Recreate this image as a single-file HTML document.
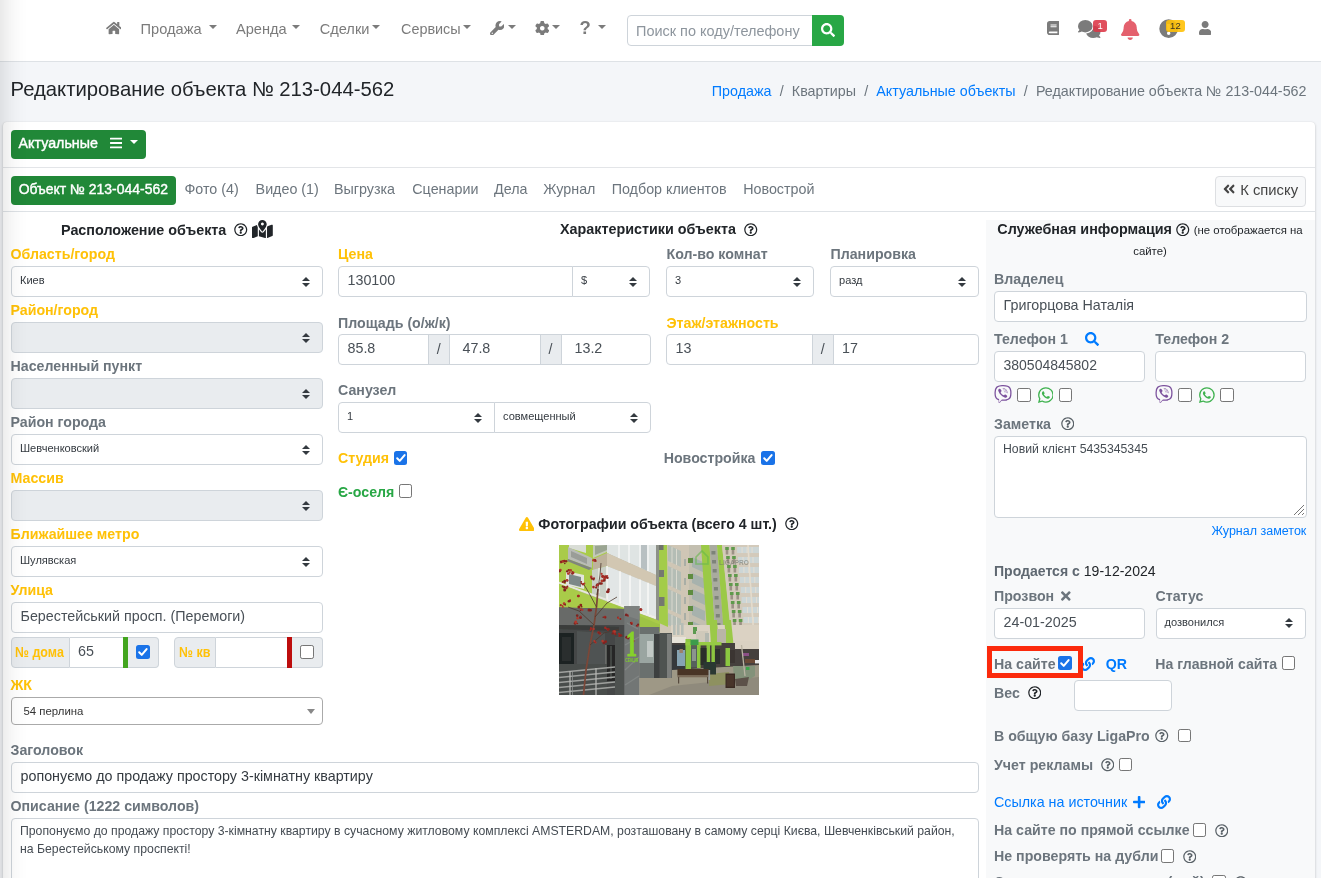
<!DOCTYPE html>
<html lang="ru"><head><meta charset="utf-8"><title>Редактирование объекта № 213-044-562</title>
<style>
html,body{margin:0;padding:0}
body{width:1321px;height:878px;overflow:hidden;position:relative;background:#f4f6f9;font-family:"Liberation Sans",Arial,sans-serif;color:#212529}
#root{position:absolute;left:0;top:0;width:1321px;height:878px;overflow:hidden;will-change:transform}
.a{position:absolute}
.t{white-space:nowrap}
.lnk{color:#007bff}
  .sep{padding:0 8.2px;color:#6c757d}
.inp{background:#fff;border:1px solid #ced4da;border-radius:4px;box-sizing:border-box;padding:0 8.5px;color:#495057;white-space:nowrap;overflow:hidden}
.sel{font-size:11.05px;padding-left:8px;color:#343a40}
.sel.dis{background:#e9ecef}
.arr{position:absolute;right:12px;top:50%;margin-top:-5px}
</style></head><body><div id="root">
<div class="a " style="left:0px;top:0px;width:1321px;height:61px;background:#fff;border-bottom:1px solid #dee2e6"></div>
<svg class="a" style="left:105.7px;top:21px;" width="15.75" height="14" viewBox="0 0 576 512"><path fill="#7b7b7b" d="M280.37 148.26L96 300.11V464a16 16 0 0 0 16 16l112.06-.29a16 16 0 0 0 15.92-16V368a16 16 0 0 1 16-16h64a16 16 0 0 1 16 16v95.64a16 16 0 0 0 16 16.05L464 480a16 16 0 0 0 16-16V300L295.67 148.26a12.19 12.19 0 0 0-15.3 0zM571.6 251.47L488 182.56V44.05a12 12 0 0 0-12-12h-56a12 12 0 0 0-12 12v72.61L318.47 43a48 48 0 0 0-61 0L4.34 251.47a12 12 0 0 0-1.6 16.9l25.5 31A12 12 0 0 0 45.15 301l235.22-193.74a12.19 12.19 0 0 1 15.3 0L530.9 301a12 12 0 0 0 16.9-1.6l25.5-31a12 12 0 0 0-1.7-16.93z"/></svg>
<div class="a t " style="left:140.6px;top:18.5px;line-height:20px;font-size:14.6px;color:#7b7b7b">Продажа</div>
<div class="a" style="left:209.1px;top:25.25px;width:0;height:0;border-left:4.1px solid transparent;border-right:4.1px solid transparent;border-top:4.3px solid #7b7b7b"></div>
<div class="a t " style="left:236px;top:18.5px;line-height:20px;font-size:14.6px;color:#7b7b7b">Аренда</div>
<div class="a" style="left:292.1px;top:25.25px;width:0;height:0;border-left:4.1px solid transparent;border-right:4.1px solid transparent;border-top:4.3px solid #7b7b7b"></div>
<div class="a t " style="left:319.7px;top:18.5px;line-height:20px;font-size:14.6px;color:#7b7b7b">Сделки</div>
<div class="a" style="left:372.3px;top:25.25px;width:0;height:0;border-left:4.1px solid transparent;border-right:4.1px solid transparent;border-top:4.3px solid #7b7b7b"></div>
<div class="a t " style="left:401px;top:18.5px;line-height:20px;font-size:14.6px;color:#7b7b7b;font-size:14.4px">Сервисы</div>
<div class="a" style="left:462.90000000000003px;top:25.25px;width:0;height:0;border-left:4.1px solid transparent;border-right:4.1px solid transparent;border-top:4.3px solid #7b7b7b"></div>
<svg class="a" style="left:489.7px;top:20.5px;" width="14.50" height="14.5" viewBox="0 0 512 512"><path fill="#7b7b7b" d="M352 320Q420 318 465 273Q510 228 512 160Q512 137 506 116Q503 108 495 106Q488 105 482 111L405 187Q400 192 393 192H336Q321 191 320 176V119Q320 112 325 107L402 30Q407 24 406 17Q404 9 396 6Q375 0 352 0Q284 2 239 47Q194 92 192 160Q192 189 202 215L20 396Q0 416 0 444Q1 473 20 492Q39 511 68 512Q96 512 116 492L298 311Q323 320 352 320ZM80 408Q102 410 104 432Q102 454 80 456Q58 454 56 432Q58 410 80 408Z"/></svg>
<div class="a" style="left:507.8px;top:25.150000000000002px;width:0;height:0;border-left:4.1px solid transparent;border-right:4.1px solid transparent;border-top:4.3px solid #7b7b7b"></div>
<svg class="a" style="left:534.8px;top:20.5px;" width="14.50" height="14.5" viewBox="0 0 512 512"><path fill="#7b7b7b" d="M496 167Q500 181 490 191L446 231Q448 243 448 256Q448 269 446 281L490 321Q500 331 496 345Q489 363 480 380L475 388Q465 404 453 419Q443 430 429 426L373 408Q353 424 329 433L317 491Q313 505 298 508Q278 512 256 512Q234 512 213 508Q199 505 195 491L183 433Q159 424 139 408L83 426Q69 430 59 419Q46 404 37 388L32 380Q23 363 16 346Q12 331 22 321L66 282Q64 269 64 256Q64 243 66 231L22 191Q12 181 16 167Q23 149 32 132L37 124Q46 108 59 93Q69 82 83 86L139 104Q159 88 183 78L195 21Q199 7 214 4Q234 0 256 0Q278 0 299 4Q313 7 317 21L329 78Q353 88 373 104L429 86Q443 82 453 93Q466 108 476 124L480 132Q489 149 496 167ZM256 336Q301 335 325 296Q347 256 325 216Q301 177 256 176Q211 177 187 216Q165 256 187 296Q211 335 256 336Z"/></svg>
<div class="a" style="left:552px;top:25.150000000000002px;width:0;height:0;border-left:4.1px solid transparent;border-right:4.1px solid transparent;border-top:4.3px solid #7b7b7b"></div>
<div class="a t " style="left:579.5px;top:17.5px;line-height:20px;font-size:18.5px;font-weight:bold;color:#7b7b7b">?</div>
<div class="a" style="left:598.4px;top:25.150000000000002px;width:0;height:0;border-left:4.1px solid transparent;border-right:4.1px solid transparent;border-top:4.3px solid #7b7b7b"></div>
<div class="a " style="left:627px;top:15px;width:186px;height:31px;background:#fff;border:1px solid #ced4da;border-radius:4px 0 0 4px;box-sizing:border-box"></div>
<div class="a t " style="left:636px;top:20.5px;line-height:20px;font-size:14.47px;color:#8d959d">Поиск по коду/телефону</div>
<div class="a " style="left:812px;top:15px;width:32px;height:31px;background:#28a745;border-radius:0 4px 4px 0"></div>
<svg class="a" style="left:821px;top:23.2px;" width="14.00" height="14" viewBox="0 0 512 512"><path fill="#fff" d="M505 442.7L405.3 343c-4.500-4.500-10.600-7-17-7H372c27.600-35.300 44-79.700 44-128C416 93.100 322.900 0 208 0S0 93.100 0 208s93.100 208 208 208c48.300 0 92.700-16.400 128-44v16.300c0 6.400 2.500 12.500 7 17l99.700 99.700c9.400 9.400 24.600 9.400 33.900 0l28.300-28.300c9.400-9.400 9.400-24.600.1-34zM208 336c-70.700 0-128-57.200-128-128 0-70.700 57.200-128 128-128 70.700 0 128 57.200 128 128 0 70.700-57.200 128-128 128z"/></svg>
<svg class="a" style="left:1046.8px;top:20.6px;" width="12.25" height="14" viewBox="0 0 448 512"><path fill="#7b7b7b" d="M448 360V24c0-13.3-10.7-24-24-24H96C43 0 0 43 0 96v320c0 53 43 96 96 96h328c13.3 0 24-10.7 24-24v-16c0-7.5-3.5-14.300-8.900-18.700-4.200-15.400-4.200-59.300 0-74.700 5.400-4.300 8.900-11.100 8.900-18.600zM128 134c0-3.300 2.700-6 6-6h212c3.300 0 6 2.700 6 6v20c0 3.300-2.700 6-6 6H134c-3.300 0-6-2.700-6-6v-20zm0 64c0-3.300 2.700-6 6-6h212c3.300 0 6 2.700 6 6v20c0 3.300-2.700 6-6 6H134c-3.300 0-6-2.700-6-6v-20zm253.400 250H96c-17.700 0-32-14.300-32-32 0-17.600 14.400-32 32-32h285.400c-1.900 17.100-1.900 46.900 0 64z"/></svg>
<svg class="a" style="left:1078.4px;top:20px;" width="22.50" height="18" viewBox="0 0 640 512"><path fill="#7b7b7b" d="M208 352Q296 350 355 300Q414 251 416 176Q414 101 355 52Q296 2 208 0Q120 2 61 52Q2 101 0 176Q1 235 40 279Q34 294 25 304Q18 313 12 318Q9 321 8 322Q7 323 7 323H6Q-2 330 1 341Q5 351 16 352Q50 351 78 340Q92 334 103 328Q150 351 208 352ZM448 176Q445 262 384 318Q322 374 232 383Q251 440 305 475Q359 511 432 512Q490 511 537 488Q548 494 562 500Q590 511 624 512Q635 511 639 501Q642 490 633 483Q633 483 633 482Q632 482 632 482Q631 481 628 478Q622 473 615 464Q606 453 600 439Q639 395 640 336Q638 265 584 216Q530 167 447 160Q448 168 448 176Z"/></svg>
<div class="a " style="left:1093.3px;top:19.8px;width:13.7px;height:12.6px;background:rgba(220,53,69,.88);border-radius:3px;color:#fff;font-size:9.5px;line-height:12.6px;text-align:center">1</div>
<svg class="a" style="left:1121.3px;top:18.6px;" width="18.38" height="21" viewBox="0 0 448 512"><path fill="#e4606d" d="M224 0Q210 0 201 9Q192 18 192 32V51Q136 63 101 106Q65 149 64 208V227Q63 299 16 354L8 363Q-5 378 3 397Q12 415 32 416H416Q436 415 445 397Q453 378 440 363L433 354Q385 300 384 227V208Q383 149 347 106Q312 63 256 51V32Q256 18 247 9Q238 0 224 0ZM269 493Q288 474 288 448H224H160Q160 474 179 493Q198 512 224 512Q250 512 269 493Z"/></svg>
<svg class="a" style="left:1159.3px;top:19.4px;fill-rule:evenodd" width="19.40" height="19.4" viewBox="0 0 512 512"><path fill="#7b7b7b" d="M256 8a248 248 0 1 0 0 496 248 248 0 1 0 0-496zM256 330a46 46 0 1 1 0 92 46 46 0 1 1 0-92zM212 132h88l-8 168h-72z"/></svg>
<div class="a " style="left:1166px;top:19.8px;width:18.8px;height:12.6px;background:rgba(255,193,7,.9);border-radius:3px;color:#3a3320;font-size:9.5px;line-height:12.6px;text-align:center">12</div>
<svg class="a" style="left:1199px;top:20.8px;" width="12.25" height="14" viewBox="0 0 448 512"><path fill="#7b7b7b" d="M224 256c70.700 0 128-57.300 128-128S294.700 0 224 0 96 57.300 96 128s57.300 128 128 128zm89.600 32h-16.700c-22.200 10.200-46.900 16-72.900 16s-50.600-5.800-72.900-16h-16.700C60.200 288 0 348.200 0 422.400V464c0 26.500 21.500 48 48 48h352c26.500 0 48-21.500 48-48v-41.600c0-74.200-60.200-134.400-134.400-134.400z"/></svg>
<div class="a t " style="left:10.5px;top:75.7px;line-height:26px;font-size:20.3px;color:#212529">Редактирование объекта № 213-044-562</div>
<div class="a t " style="right:14.5px;top:81.0px;line-height:20px;font-size:14.3px;color:#6c757d"><span class="lnk">Продажа</span><span class="sep">/</span>Квартиры<span class="sep">/</span><span class="lnk">Актуальные объекты</span><span class="sep">/</span>Редактирование объекта № 213-044-562</div>
<div class="a " style="left:3px;top:121.5px;width:1312.3px;height:900px;background:#fff;border-radius:4px;box-shadow:0 0 1px rgba(0,0,0,.125),0 1px 3px rgba(0,0,0,.2)"></div>
<div class="a " style="left:3px;top:167px;width:1312.3px;height:1px;background:#e3e5e8"></div>
<div class="a " style="left:3px;top:210.5px;width:1312.3px;height:1px;background:#dee2e6"></div>
<div class="a " style="left:11px;top:130px;width:135px;height:29px;background:#218838;border-radius:4px"></div>
<div class="a t " style="left:18.6px;top:133.2px;line-height:20px;font-size:14.25px;color:#fff;-webkit-text-stroke:.4px #fff">Актуальные</div>
<svg class="a" style="left:109.7px;top:135.6px;" width="12.25" height="14" viewBox="0 0 448 512"><path fill="#fff" d="M16 132h416c8.837 0 16-7.163 16-16V76c0-8.837-7.163-16-16-16H16C7.163 60 0 67.163 0 76v40c0 8.837 7.163 16 16 16zm0 160h416c8.837 0 16-7.163 16-16v-40c0-8.837-7.163-16-16-16H16c-8.837 0-16 7.163-16 16v40c0 8.837 7.163 16 16 16zm0 160h416c8.837 0 16-7.163 16-16v-40c0-8.837-7.163-16-16-16H16c-8.837 0-16 7.163-16 16v40c0 8.837 7.163 16 16 16z"/></svg>
<div class="a" style="left:130px;top:140.0px;width:0;height:0;border-left:4.2px solid transparent;border-right:4.2px solid transparent;border-top:4.4px solid #fff"></div>
<div class="a " style="left:11px;top:176px;width:165px;height:28.5px;background:#218838;border-radius:4px"></div>
<div class="a t " style="left:18.7px;top:178.8px;line-height:20px;font-size:13.95px;color:#fff;-webkit-text-stroke:.4px #fff">Объект № 213-044-562</div>
<div class="a t " style="left:184.4px;top:178.8px;line-height:20px;font-size:14.3px;color:#6c757d">Фото (4)</div>
<div class="a t " style="left:255.6px;top:178.8px;line-height:20px;font-size:14.3px;color:#6c757d">Видео (1)</div>
<div class="a t " style="left:334px;top:178.8px;line-height:20px;font-size:14.3px;color:#6c757d">Выгрузка</div>
<div class="a t " style="left:412.3px;top:178.8px;line-height:20px;font-size:14.3px;color:#6c757d">Сценарии</div>
<div class="a t " style="left:494px;top:178.8px;line-height:20px;font-size:14.3px;color:#6c757d">Дела</div>
<div class="a t " style="left:543.3px;top:178.8px;line-height:20px;font-size:14.3px;color:#6c757d">Журнал</div>
<div class="a t " style="left:611.7px;top:178.8px;line-height:20px;font-size:14.3px;color:#6c757d">Подбор клиентов</div>
<div class="a t " style="left:743.2px;top:178.8px;line-height:20px;font-size:14.3px;color:#6c757d">Новострой</div>
<div class="a " style="left:1215px;top:176px;width:90.5px;height:30.5px;background:#f8f9fa;border:1px solid #dddfe2;border-radius:4px;box-sizing:border-box"></div>
<svg class="a" style="left:1223px;top:182.4px;" width="12.25" height="14" viewBox="0 0 448 512"><path fill="#444" d="M223.700 239l136-136c9.400-9.400 24.600-9.400 33.900 0l22.600 22.600c9.400 9.400 9.400 24.600 0 33.900L319.900 256l96.400 96.400c9.400 9.400 9.400 24.600 0 33.900L393.700 409c-9.400 9.400-24.600 9.400-33.900 0l-136-136c-9.500-9.400-9.500-24.600-.1-34zm-192 34l136 136c9.400 9.400 24.600 9.400 33.900 0l22.600-22.600c9.400-9.400 9.400-24.600 0-33.900L127.900 256l96.400-96.400c9.400-9.400 9.400-24.600 0-33.900L201.700 103c-9.400-9.400-24.600-9.400-33.900 0l-136 136c-9.500 9.400-9.500 24.600-.1 34z"/></svg>
<div class="a t " style="left:1240.2px;top:180.2px;line-height:20px;font-size:14.8px;color:#444">К списку</div>
<div class="a t " style="left:61px;top:219.5px;line-height:20px;font-weight:bold;font-size:14.2px;font-size:14.35px;color:#212529">Расположение объекта</div>
<svg class="a" style="left:234px;top:222.75px;" width="13.50" height="13.5" viewBox="0 0 512 512"><path fill="#212529" d="M256 8C119.043 8 8 119.083 8 256c0 136.997 111.043 248 248 248s248-111.003 248-248C504 119.083 392.957 8 256 8zm0 448c-110.532 0-200-89.431-200-200 0-110.495 89.472-200 200-200 110.491 0 200 89.471 200 200 0 110.530-89.431 200-200 200zm107.244-255.200c0 67.052-72.421 68.084-72.421 92.863V300c0 6.627-5.373 12-12 12h-45.647c-6.627 0-12-5.373-12-12v-8.659c0-35.745 27.100-50.034 47.579-61.516 17.561-9.845 28.324-16.541 28.324-29.579 0-17.246-21.999-28.693-39.784-28.693-23.189 0-33.894 10.977-48.942 29.969-4.057 5.120-11.460 6.071-16.666 2.124l-27.824-21.098c-5.107-3.872-6.251-11.066-2.644-16.363C184.846 131.491 214.940 112 261.794 112c49.071 0 101.450 38.304 101.450 88.800zM298 368c0 23.159-18.841 42-42 42s-42-18.841-42-42 18.841-42 42-42 42 18.841 42 42z"/></svg>
<svg class="a" style="left:252px;top:219.5px;" width="20.81" height="18.5" viewBox="0 0 576 512"><path fill="#212529" d="M408 120Q407 148 388 185Q369 222 344 257Q320 291 303 312Q297 319 288 319Q279 319 273 312Q256 291 232 257Q207 222 188 185Q169 148 168 120Q169 69 203 35Q237 1 288 0Q339 1 373 35Q407 69 408 120ZM416 200Q421 190 426 180Q426 179 426 178Q427 177 427 176L543 130Q556 125 565 132Q575 139 576 152V423Q575 439 561 445L416 503V200ZM138 138Q142 160 150 180Q155 190 160 200V452L33 503Q20 507 11 500Q1 494 0 480V210Q1 194 15 187L138 138ZM328 332Q351 304 384 255V504L192 449V255Q225 304 248 332Q265 351 288 351Q311 351 328 332ZM288 152Q311 151 323 132Q333 112 323 92Q311 73 288 72Q265 73 253 92Q243 112 253 132Q265 151 288 152Z"/></svg>
<div class="a t " style="left:10.5px;top:244.0px;line-height:20px;font-weight:bold;font-size:14.2px;color:#ffc107">Область/город</div>
<div class="a inp sel" style="left:11px;top:266px;width:312px;height:31px;line-height:27.5px;">Киев<svg class="arr" width="8" height="10" viewBox="0 0 4 5"><path fill="#343a40" d="M2 0L0 2h4zm0 5L0 3h4z"/></svg></div>
<div class="a t " style="left:10.5px;top:300.0px;line-height:20px;font-weight:bold;font-size:14.2px;color:#ffc107">Район/город</div>
<div class="a inp sel dis" style="left:11px;top:322px;width:312px;height:31px;line-height:27.5px;"><svg class="arr" width="8" height="10" viewBox="0 0 4 5"><path fill="#343a40" d="M2 0L0 2h4zm0 5L0 3h4z"/></svg></div>
<div class="a t " style="left:10.5px;top:356.0px;line-height:20px;font-weight:bold;font-size:14.2px;color:#6c757d">Населенный пункт</div>
<div class="a inp sel dis" style="left:11px;top:378px;width:312px;height:31px;line-height:27.5px;"><svg class="arr" width="8" height="10" viewBox="0 0 4 5"><path fill="#343a40" d="M2 0L0 2h4zm0 5L0 3h4z"/></svg></div>
<div class="a t " style="left:10.5px;top:412.0px;line-height:20px;font-weight:bold;font-size:14.2px;color:#6c757d">Район города</div>
<div class="a inp sel" style="left:11px;top:434px;width:312px;height:31px;line-height:27.5px;">Шевченковский<svg class="arr" width="8" height="10" viewBox="0 0 4 5"><path fill="#343a40" d="M2 0L0 2h4zm0 5L0 3h4z"/></svg></div>
<div class="a t " style="left:10.5px;top:468.0px;line-height:20px;font-weight:bold;font-size:14.2px;color:#ffc107">Массив</div>
<div class="a inp sel dis" style="left:11px;top:490px;width:312px;height:31px;line-height:27.5px;"><svg class="arr" width="8" height="10" viewBox="0 0 4 5"><path fill="#343a40" d="M2 0L0 2h4zm0 5L0 3h4z"/></svg></div>
<div class="a t " style="left:10.5px;top:524.0px;line-height:20px;font-weight:bold;font-size:14.2px;color:#ffc107">Ближайшее метро</div>
<div class="a inp sel" style="left:11px;top:546px;width:312px;height:31px;line-height:27.5px;">Шулявская<svg class="arr" width="8" height="10" viewBox="0 0 4 5"><path fill="#343a40" d="M2 0L0 2h4zm0 5L0 3h4z"/></svg></div>
<div class="a t " style="left:10.5px;top:580.0px;line-height:20px;font-weight:bold;font-size:14.2px;color:#ffc107">Улица</div>
<div class="a inp" style="left:11px;top:602px;width:312px;height:31px;font-size:14.3px;line-height:27.5px;">Берестейський просп. (Перемоги)</div>
<div class="a " style="left:11px;top:637px;width:58.5px;height:30.5px;background:#e9ecef;border:1px solid #ced4da;border-radius:4px 0 0 4px;box-sizing:border-box"></div>
<div class="a t " style="left:15.4px;top:641.5px;line-height:20px;font-weight:bold;font-size:14.2px;transform:scaleX(.881);transform-origin:0 50%;color:#ffc107">№ дома</div>
<div class="a " style="left:69.5px;top:637px;width:54px;height:30.5px;background:#fff;border:1px solid #ced4da;border-left:0;border-right:0;box-sizing:border-box"></div>
<div class="a t " style="left:78px;top:640.9px;line-height:20px;font-size:14.3px;color:#495057">65</div>
<div class="a " style="left:123px;top:637px;width:5px;height:30.5px;background:#43a51f"></div>
<div class="a " style="left:128px;top:637px;width:30.6px;height:30.5px;background:#e9ecef;border:1px solid #ced4da;border-left:0;border-radius:0 4px 4px 0;box-sizing:border-box"></div>
<div class="a" style="left:136.3px;top:645.2px;width:13.8px;height:13.8px;background:#1a73e8;border-radius:2.5px"><svg width="13.8" height="13.8" viewBox="0 0 13 13" style="display:block"><path d="M3 6.8l2.4 2.5L10 3.8" fill="none" stroke="#fff" stroke-width="1.9" stroke-linecap="round" stroke-linejoin="round"/></svg></div>
<div class="a " style="left:174.3px;top:637px;width:41.5px;height:30.5px;background:#e9ecef;border:1px solid #ced4da;border-radius:4px 0 0 4px;box-sizing:border-box"></div>
<div class="a t " style="left:179.4px;top:641.5px;line-height:20px;font-weight:bold;font-size:14.2px;transform:scaleX(.881);transform-origin:0 50%;color:#ffc107">№ кв</div>
<div class="a " style="left:215.8px;top:637px;width:71.5px;height:30.5px;background:#fff;border:1px solid #ced4da;border-left:0;border-right:0;box-sizing:border-box"></div>
<div class="a " style="left:287px;top:637px;width:5px;height:30.5px;background:#bd0d0d"></div>
<div class="a " style="left:292px;top:637px;width:30.6px;height:30.5px;background:#e9ecef;border:1px solid #ced4da;border-left:0;border-radius:0 4px 4px 0;box-sizing:border-box"></div>
<div class="a" style="left:300.3px;top:645.2px;width:13.8px;height:13.8px;background:#fff;border:1px solid #767676;border-radius:2.2px;box-sizing:border-box"></div>
<div class="a t " style="left:10.5px;top:674.5px;line-height:20px;font-weight:bold;font-size:14.2px;color:#ffc107">ЖК</div>
<div class="a " style="left:11px;top:697px;width:312px;height:28px;background:#fff;border:1px solid #aaa;border-radius:4px;box-sizing:border-box"></div>
<div class="a t " style="left:23.5px;top:701.0px;line-height:20px;font-size:11.4px;color:#333">54 перлина</div>
<div class="a" style="left:307.3px;top:708.8px;width:0;height:0;border-left:4.0px solid transparent;border-right:4.0px solid transparent;border-top:5px solid #888"></div>
<div class="a t " style="left:10.5px;top:740.0px;line-height:20px;font-weight:bold;font-size:14.2px;color:#6c757d">Заголовок</div>
<div class="a inp" style="left:11px;top:761.5px;width:967.5px;height:31px;font-size:14.3px;line-height:27.5px;color:#343a40">ропонуємо до продажу простору 3-кімнатну квартиру</div>
<div class="a t " style="left:10.5px;top:796.0px;line-height:20px;font-weight:bold;font-size:14.2px;color:#6c757d">Описание (1222 символов)</div>
<div class="a " style="left:11px;top:817.5px;width:967.5px;height:80px;background:#fff;border:1px solid #ced4da;border-radius:4px;box-sizing:border-box;padding:3.3px 8px;font-size:12.25px;line-height:18.5px;color:#454c53;white-space:nowrap">Пропонуємо до продажу простору 3-кімнатну квартиру в сучасному житловому комплексі AMSTERDAM, розташовану в самому серці Києва, Шевченківський район,<br>на Берестейському проспекті!</div>
<div class="a t " style="left:560px;top:219.3px;line-height:20px;font-weight:bold;font-size:14.2px;font-size:14.35px;color:#212529">Характеристики объекта</div>
<svg class="a" style="left:744.3px;top:222.55px;" width="13.50" height="13.5" viewBox="0 0 512 512"><path fill="#212529" d="M256 8C119.043 8 8 119.083 8 256c0 136.997 111.043 248 248 248s248-111.003 248-248C504 119.083 392.957 8 256 8zm0 448c-110.532 0-200-89.431-200-200 0-110.495 89.472-200 200-200 110.491 0 200 89.471 200 200 0 110.530-89.431 200-200 200zm107.244-255.200c0 67.052-72.421 68.084-72.421 92.863V300c0 6.627-5.373 12-12 12h-45.647c-6.627 0-12-5.373-12-12v-8.659c0-35.745 27.100-50.034 47.579-61.516 17.561-9.845 28.324-16.541 28.324-29.579 0-17.246-21.999-28.693-39.784-28.693-23.189 0-33.894 10.977-48.942 29.969-4.057 5.120-11.460 6.071-16.666 2.124l-27.824-21.098c-5.107-3.872-6.251-11.066-2.644-16.363C184.846 131.491 214.940 112 261.794 112c49.071 0 101.450 38.304 101.450 88.800zM298 368c0 23.159-18.841 42-42 42s-42-18.841-42-42 18.841-42 42-42 42 18.841 42 42z"/></svg>
<div class="a t " style="left:338px;top:244.0px;line-height:20px;font-weight:bold;font-size:14.2px;color:#ffc107">Цена</div>
<div class="a t " style="left:666.5px;top:244.0px;line-height:20px;font-weight:bold;font-size:14.2px;color:#6c757d">Кол-во комнат</div>
<div class="a t " style="left:830.5px;top:244.0px;line-height:20px;font-weight:bold;font-size:14.2px;color:#6c757d">Планировка</div>
<div class="a inp" style="left:338px;top:266px;width:235px;height:31px;font-size:14.3px;line-height:27.5px;border-radius:4px 0 0 4px">130100</div>
<div class="a inp sel" style="left:572px;top:266px;width:77.5px;height:31px;line-height:27.5px;border-radius:0 4px 4px 0">$<svg class="arr" width="8" height="10" viewBox="0 0 4 5"><path fill="#343a40" d="M2 0L0 2h4zm0 5L0 3h4z"/></svg></div>
<div class="a inp sel" style="left:666px;top:266px;width:148.3px;height:31px;line-height:27.5px;">3<svg class="arr" width="8" height="10" viewBox="0 0 4 5"><path fill="#343a40" d="M2 0L0 2h4zm0 5L0 3h4z"/></svg></div>
<div class="a inp sel" style="left:830px;top:266px;width:148.5px;height:31px;line-height:27.5px;">разд<svg class="arr" width="8" height="10" viewBox="0 0 4 5"><path fill="#343a40" d="M2 0L0 2h4zm0 5L0 3h4z"/></svg></div>
<div class="a t " style="left:338px;top:312.5px;line-height:20px;font-weight:bold;font-size:14.2px;color:#6c757d">Площадь (о/ж/к)</div>
<div class="a t " style="left:666.5px;top:312.5px;line-height:20px;font-weight:bold;font-size:14.2px;color:#ffc107">Этаж/этажность</div>
<div class="a inp" style="left:338px;top:334px;width:91px;height:31px;font-size:14.3px;line-height:27.5px;border-radius:4px 0 0 4px">85.8</div>
<div class="a " style="left:428px;top:334px;width:21.5px;height:31px;background:#e9ecef;border:1px solid #ced4da;box-sizing:border-box;text-align:center;line-height:29px;font-size:14.3px;color:#495057">/</div>
<div class="a inp" style="left:448.5px;top:334px;width:92px;height:31px;font-size:14.3px;line-height:27.5px;border-radius:0;padding-left:13px">47.8</div>
<div class="a " style="left:539.5px;top:334px;width:22px;height:31px;background:#e9ecef;border:1px solid #ced4da;box-sizing:border-box;text-align:center;line-height:29px;font-size:14.3px;color:#495057">/</div>
<div class="a inp" style="left:560.5px;top:334px;width:90px;height:31px;font-size:14.3px;line-height:27.5px;border-radius:0 4px 4px 0;padding-left:13px">13.2</div>
<div class="a inp" style="left:666px;top:334px;width:147px;height:31px;font-size:14.3px;line-height:27.5px;border-radius:4px 0 0 4px">13</div>
<div class="a " style="left:812px;top:334px;width:21.7px;height:31px;background:#e9ecef;border:1px solid #ced4da;box-sizing:border-box;text-align:center;line-height:29px;font-size:14.3px;color:#495057">/</div>
<div class="a inp" style="left:833px;top:334px;width:145.5px;height:31px;font-size:14.3px;line-height:27.5px;border-radius:0 4px 4px 0;padding-left:8px">17</div>
<div class="a t " style="left:338px;top:380.0px;line-height:20px;font-weight:bold;font-size:14.2px;color:#6c757d">Санузел</div>
<div class="a inp sel" style="left:338px;top:402px;width:157px;height:31px;line-height:27.5px;border-radius:4px 0 0 4px">1<svg class="arr" width="8" height="10" viewBox="0 0 4 5"><path fill="#343a40" d="M2 0L0 2h4zm0 5L0 3h4z"/></svg></div>
<div class="a inp sel" style="left:494px;top:402px;width:156.5px;height:31px;line-height:27.5px;border-radius:0 4px 4px 0">совмещенный<svg class="arr" width="8" height="10" viewBox="0 0 4 5"><path fill="#343a40" d="M2 0L0 2h4zm0 5L0 3h4z"/></svg></div>
<div class="a t " style="left:338px;top:448.0px;line-height:20px;font-weight:bold;font-size:14.2px;color:#ffc107">Студия</div>
<div class="a" style="left:393.5px;top:451px;width:13.8px;height:13.8px;background:#1a73e8;border-radius:2.5px"><svg width="13.8" height="13.8" viewBox="0 0 13 13" style="display:block"><path d="M3 6.8l2.4 2.5L10 3.8" fill="none" stroke="#fff" stroke-width="1.9" stroke-linecap="round" stroke-linejoin="round"/></svg></div>
<div class="a t " style="left:663.7px;top:448.0px;line-height:20px;font-weight:bold;font-size:14.2px;color:#6c757d">Новостройка</div>
<div class="a" style="left:760.8px;top:451px;width:13.8px;height:13.8px;background:#1a73e8;border-radius:2.5px"><svg width="13.8" height="13.8" viewBox="0 0 13 13" style="display:block"><path d="M3 6.8l2.4 2.5L10 3.8" fill="none" stroke="#fff" stroke-width="1.9" stroke-linecap="round" stroke-linejoin="round"/></svg></div>
<div class="a t " style="left:338px;top:481.5px;line-height:20px;font-weight:bold;font-size:14.2px;color:#28a745">Є-оселя</div>
<div class="a" style="left:398.5px;top:484px;width:13.8px;height:13.8px;background:#fff;border:1px solid #767676;border-radius:2.2px;box-sizing:border-box"></div>
<svg class="a" style="left:518.5px;top:516.6px;" width="15.75" height="14" viewBox="0 0 576 512"><path fill="#ffc107" d="M569.517 440.013C587.975 472.007 564.806 512 527.940 512H48.054c-36.937 0-59.999-40.055-41.577-71.987L246.423 23.985c18.467-32.009 64.720-31.951 83.154 0l239.940 416.028zM288 354c-25.405 0-46 20.595-46 46s20.595 46 46 46 46-20.595 46-46-20.595-46-46-46zm-43.673-165.346l7.418 136c.347 6.364 5.609 11.346 11.982 11.346h48.546c6.373 0 11.635-4.982 11.982-11.346l7.418-136c.375-6.874-5.098-12.654-11.982-12.654h-63.383c-6.884 0-12.356 5.780-11.981 12.654z"/></svg>
<div class="a t " style="left:538.3px;top:513.7px;line-height:20px;font-weight:bold;font-size:14.2px;font-size:14.18px;color:#212529">Фотографии объекта (всего 4 шт.)</div>
<svg class="a" style="left:785px;top:516.95px;" width="13.50" height="13.5" viewBox="0 0 512 512"><path fill="#212529" d="M256 8C119.043 8 8 119.083 8 256c0 136.997 111.043 248 248 248s248-111.003 248-248C504 119.083 392.957 8 256 8zm0 448c-110.532 0-200-89.431-200-200 0-110.495 89.472-200 200-200 110.491 0 200 89.471 200 200 0 110.530-89.431 200-200 200zm107.244-255.200c0 67.052-72.421 68.084-72.421 92.863V300c0 6.627-5.373 12-12 12h-45.647c-6.627 0-12-5.373-12-12v-8.659c0-35.745 27.100-50.034 47.579-61.516 17.561-9.845 28.324-16.541 28.324-29.579 0-17.246-21.999-28.693-39.784-28.693-23.189 0-33.894 10.977-48.942 29.969-4.057 5.120-11.460 6.071-16.666 2.124l-27.824-21.098c-5.107-3.872-6.251-11.066-2.644-16.363C184.846 131.491 214.940 112 261.794 112c49.071 0 101.450 38.304 101.450 88.800zM298 368c0 23.159-18.841 42-42 42s-42-18.841-42-42 18.841-42 42-42 42 18.841 42 42z"/></svg>
<svg class="a" style="left:559px;top:545px" width="200" height="150" viewBox="0 0 200 150">
<defs><filter id="pb" x="0" y="0" width="100%" height="100%"><feGaussianBlur stdDeviation=".45"/></filter><clipPath id="pc"><rect width="200" height="150"/></clipPath></defs>
<g clip-path="url(#pc)"><g filter="url(#pb)">
<rect x="0" y="0" width="200" height="150" fill="#b9b7a6"/>
<polygon points="0,0 50,0 50,55 0,40" fill="#a9cb4a"/>
<polygon points="10,0 27,0 27,8 10,3" fill="#d9ddd6"/>
<polygon points="34,0 50,0 50,6 34,13" fill="#c3c9b8"/>
<polygon points="36,1 48,0 48,5 36,10" fill="#9aa592"/>
<polygon points="9,2 33,13 33,23 9,14" fill="#b9bcb6"/>
<polygon points="12,6 28,13 28,19 12,12" fill="#9a9d98"/>
<polygon points="9,14 33,23 30,25 8,16" fill="#80857c"/>
<polygon points="7,26 25,30 25,44 7,40" fill="#e3e5dd"/>
<polygon points="10,29 22,32 22,42 10,39" fill="#7d8988"/>
<polygon points="48,0 97,0 97,30 48,8" fill="#dfe4e3"/>
<line x1="60" y1="0" x2="60" y2="13.387755102040817" stroke="#f6f7f6" stroke-width="1.4"/>
<line x1="70" y1="0" x2="70" y2="17.877551020408163" stroke="#f6f7f6" stroke-width="1.4"/>
<line x1="81" y1="0" x2="81" y2="22.816326530612244" stroke="#f6f7f6" stroke-width="1.4"/>
<line x1="89" y1="0" x2="89" y2="26.408163265306122" stroke="#f6f7f6" stroke-width="1.4"/>
<polygon points="82,0 88,0 88,26 82,23" fill="#b8c0c2"/>
<polygon points="34,14 48,8 48,21 34,25" fill="#bdb29c"/>
<polygon points="48,8 97,30 97,41 48,21" fill="#d2c7b2"/>
<polygon points="33,25 48,21 48,55 33,49" fill="#c9cfc6"/>
<polygon points="48,21 97,41 97,72 48,55" fill="#e2e6e6"/>
<line x1="61" y1="26.306122448979593" x2="61" y2="59.51020408163265" stroke="#f8f8f6" stroke-width="1.6"/>
<line x1="71" y1="30.387755102040817" x2="71" y2="62.97959183673469" stroke="#f8f8f6" stroke-width="1.6"/>
<line x1="81" y1="34.46938775510204" x2="81" y2="66.44897959183673" stroke="#f8f8f6" stroke-width="1.6"/>
<line x1="89" y1="37.734693877551024" x2="89" y2="69.22448979591837" stroke="#f8f8f6" stroke-width="1.6"/>
<line x1="48" y1="21" x2="48" y2="55" stroke="#f4f4f0" stroke-width="1.6"/>
<line x1="40" y1="23" x2="40" y2="48" stroke="#eeeee8" stroke-width="1.2"/>
<line x1="0" y1="37.6" x2="48" y2="55" stroke="#e6e7de" stroke-width="2"/>
<line x1="48" y1="55.5" x2="97" y2="73" stroke="#eeeeea" stroke-width="2.4"/>
<polygon points="97,0 101,0 101,80 97,76" fill="#8d9188"/>
<polygon points="0,39 48,56.5 97,74.5 112,80 112,89 81,82.5 65,64 0,62.5" fill="#a9cb4a"/>
<polygon points="55,60 97,78 111,83 111,88 81,82 66,70" fill="#9fc445"/>
<polygon points="0,62.5 66,64 66,150 0,150" fill="#444746"/>
<polygon points="0,62.5 66,64 66,80 0,80" fill="#676a67"/>
<polygon points="0,80 60,82 60,86 0,84" fill="#3a3c3b"/>
<rect x="0" y="88" width="15" height="31" fill="#1f2120"/>
<rect x="3" y="92" width="9" height="24" fill="#2b2e2d"/>
<polygon points="18,86 46,88 46,126 18,124" fill="#4f5352"/>
<rect x="47" y="100" width="9" height="36" fill="#262827"/>
<line x1="47" y1="100" x2="47" y2="136" stroke="#8a8d8b" stroke-width="1"/>
<line x1="52" y1="101" x2="52" y2="134" stroke="#6d706e" stroke-width="0.8"/>
<rect x="0" y="119" width="48" height="31" fill="#4a4d4c"/>
<line x1="0" y1="127.5" x2="56" y2="122" stroke="#9fa19e" stroke-width="1.3"/>
<line x1="0" y1="132.5" x2="56" y2="127" stroke="#9fa19e" stroke-width="1.3"/>
<line x1="0" y1="137.5" x2="56" y2="132" stroke="#9fa19e" stroke-width="1.3"/>
<line x1="0" y1="142.5" x2="56" y2="137" stroke="#9fa19e" stroke-width="1.3"/>
<line x1="0" y1="147.5" x2="56" y2="142" stroke="#9fa19e" stroke-width="1.3"/>
<line x1="11" y1="126" x2="11" y2="150" stroke="#b9bbb8" stroke-width="1.2"/>
<line x1="37" y1="123" x2="37" y2="150" stroke="#b9bbb8" stroke-width="1.2"/>
<line x1="13.5" y1="127" x2="13.5" y2="150" stroke="#8f9290" stroke-width="0.8"/>
<rect x="56" y="92" width="10" height="58" fill="#4e5150"/>
<rect x="65.3" y="61" width="15.2" height="89" fill="#727675"/>
<polygon points="65.3,61 80.5,61 80.5,75 65.3,70" fill="#7d817f"/>
<line x1="66" y1="100" x2="80" y2="92" stroke="#8b908e" stroke-width="1.2" opacity="0.6"/>
<line x1="66" y1="125" x2="80" y2="112" stroke="#8b908e" stroke-width="1.2" opacity="0.6"/>
<line x1="66" y1="140" x2="80" y2="131" stroke="#8b908e" stroke-width="1.2" opacity="0.6"/>
<line x1="68" y1="78" x2="79" y2="84" stroke="#8b908e" stroke-width="1.2" opacity="0.6"/>
<rect x="80.5" y="82" width="20" height="68" fill="#6b6f6e"/>
<rect x="80.5" y="89" width="14.5" height="29" fill="#9aa5a1"/>
<rect x="88" y="96" width="6" height="16" fill="#c2c9c6"/>
<rect x="80.5" y="118" width="14.5" height="15" fill="#6a6f6e"/>
<rect x="80.5" y="133" width="32" height="17" fill="#a7a7a1"/>
<rect x="95" y="89" width="6" height="44" fill="#3e4140"/>
<rect x="101" y="0" width="99" height="110" fill="#cfc6b5"/>
<polygon points="100,0 108,0 109,82 100,78" fill="#a3cc48"/>
<rect x="100" y="0" width="4.5" height="5" fill="#6f736d"/>
<rect x="100" y="25" width="5" height="7" fill="#74786f"/>
<rect x="100" y="52" width="5.5" height="9" fill="#74786f"/>
<polygon points="109,0 122,6 122,22 109,16" fill="#b4bdb5"/>
<line x1="113" y1="2" x2="113" y2="18" stroke="#e3e0d6" stroke-width="0.8"/>
<line x1="117.5" y1="4" x2="117.5" y2="20" stroke="#e3e0d6" stroke-width="0.8"/>
<polygon points="109,21 122,27 122,46 109,40" fill="#b4bdb5"/>
<line x1="113" y1="23" x2="113" y2="42" stroke="#e3e0d6" stroke-width="0.8"/>
<line x1="117.5" y1="25" x2="117.5" y2="44" stroke="#e3e0d6" stroke-width="0.8"/>
<polygon points="109,44 122,50 122,70 109,64" fill="#b4bdb5"/>
<line x1="113" y1="46" x2="113" y2="66" stroke="#e3e0d6" stroke-width="0.8"/>
<line x1="117.5" y1="48" x2="117.5" y2="68" stroke="#e3e0d6" stroke-width="0.8"/>
<polygon points="109,68 122,74 122,86 109,80" fill="#b4bdb5"/>
<line x1="113" y1="70" x2="113" y2="82" stroke="#e3e0d6" stroke-width="0.8"/>
<line x1="117.5" y1="72" x2="117.5" y2="84" stroke="#e3e0d6" stroke-width="0.8"/>
<rect x="125" y="14" width="2" height="7" fill="#a9aea6"/>
<rect x="125" y="33" width="2" height="7" fill="#a9aea6"/>
<rect x="125" y="52" width="2" height="7" fill="#a9aea6"/>
<rect x="125" y="68" width="2" height="7" fill="#a9aea6"/>
<polygon points="130,0 143,0 150,100 130,100" fill="#c3bfb0"/>
<polygon points="133,12 146,18 146,28 133,22" fill="#a7b2ad"/>
<rect x="129" y="13" width="5" height="5" fill="#5e8c3f"/>
<polygon points="133,28 146,34 146,44 133,38" fill="#a7b2ad"/>
<rect x="129" y="29" width="5" height="5" fill="#5e8c3f"/>
<polygon points="133,44 146,50 146,60 133,54" fill="#a7b2ad"/>
<rect x="129" y="45" width="5" height="5" fill="#5e8c3f"/>
<polygon points="133,60 146,66 146,76 133,70" fill="#a7b2ad"/>
<rect x="129" y="61" width="5" height="5" fill="#5e8c3f"/>
<polygon points="133,76 146,82 146,92 133,86" fill="#a7b2ad"/>
<rect x="129" y="77" width="5" height="5" fill="#5e8c3f"/>
<polygon points="142,0 150.5,0 157,100 149,100" fill="#9bc947"/>
<polygon points="150.5,0 158,0 166,100 157,100" fill="#a9ab9f"/>
<rect x="152.42" y="6" width="4" height="3.5" fill="#7d8379"/>
<rect x="153.05" y="15" width="4" height="3.5" fill="#7d8379"/>
<rect x="153.68" y="24" width="4" height="3.5" fill="#7d8379"/>
<rect x="154.31" y="33" width="4" height="3.5" fill="#7d8379"/>
<rect x="154.94" y="42" width="4" height="3.5" fill="#7d8379"/>
<rect x="155.57" y="51" width="4" height="3.5" fill="#7d8379"/>
<rect x="156.2" y="60" width="4" height="3.5" fill="#7d8379"/>
<rect x="156.83" y="69" width="4" height="3.5" fill="#7d8379"/>
<rect x="157.46" y="78" width="4" height="3.5" fill="#7d8379"/>
<rect x="158.09" y="87" width="4" height="3.5" fill="#7d8379"/>
<rect x="158.72" y="96" width="4" height="3.5" fill="#7d8379"/>
<polygon points="158,0 163,0 174,104 166,104" fill="#9bc947"/>
<polygon points="163,0 200,0 200,110 174,110" fill="#d3cabb"/>
<rect x="166.21" y="2" width="3.6" height="3" fill="#5f9a4c"/>
<rect x="172.21" y="2" width="3.6" height="3" fill="#5f9a4c"/>
<rect x="166.71" y="5" width="2.6" height="4.5" fill="#9b9185"/>
<rect x="172.71" y="5" width="2.6" height="4.5" fill="#9b9185"/>
<rect x="167.155" y="11" width="3.6" height="3" fill="#5f9a4c"/>
<rect x="173.155" y="11" width="3.6" height="3" fill="#5f9a4c"/>
<rect x="167.655" y="14" width="2.6" height="4.5" fill="#9b9185"/>
<rect x="173.655" y="14" width="2.6" height="4.5" fill="#9b9185"/>
<rect x="168.1" y="20" width="3.6" height="3" fill="#5f9a4c"/>
<rect x="174.1" y="20" width="3.6" height="3" fill="#5f9a4c"/>
<rect x="168.6" y="23" width="2.6" height="4.5" fill="#9b9185"/>
<rect x="174.6" y="23" width="2.6" height="4.5" fill="#9b9185"/>
<rect x="169.045" y="29" width="3.6" height="3" fill="#5f9a4c"/>
<rect x="175.045" y="29" width="3.6" height="3" fill="#5f9a4c"/>
<rect x="169.545" y="32" width="2.6" height="4.5" fill="#9b9185"/>
<rect x="175.545" y="32" width="2.6" height="4.5" fill="#9b9185"/>
<rect x="169.99" y="38" width="3.6" height="3" fill="#5f9a4c"/>
<rect x="175.99" y="38" width="3.6" height="3" fill="#5f9a4c"/>
<rect x="170.49" y="41" width="2.6" height="4.5" fill="#9b9185"/>
<rect x="176.49" y="41" width="2.6" height="4.5" fill="#9b9185"/>
<rect x="170.935" y="47" width="3.6" height="3" fill="#5f9a4c"/>
<rect x="176.935" y="47" width="3.6" height="3" fill="#5f9a4c"/>
<rect x="171.435" y="50" width="2.6" height="4.5" fill="#9b9185"/>
<rect x="177.435" y="50" width="2.6" height="4.5" fill="#9b9185"/>
<rect x="171.88" y="56" width="3.6" height="3" fill="#5f9a4c"/>
<rect x="177.88" y="56" width="3.6" height="3" fill="#5f9a4c"/>
<rect x="172.38" y="59" width="2.6" height="4.5" fill="#9b9185"/>
<rect x="178.38" y="59" width="2.6" height="4.5" fill="#9b9185"/>
<rect x="172.825" y="65" width="3.6" height="3" fill="#5f9a4c"/>
<rect x="178.825" y="65" width="3.6" height="3" fill="#5f9a4c"/>
<rect x="173.325" y="68" width="2.6" height="4.5" fill="#9b9185"/>
<rect x="179.325" y="68" width="2.6" height="4.5" fill="#9b9185"/>
<rect x="173.77" y="74" width="3.6" height="3" fill="#5f9a4c"/>
<rect x="179.77" y="74" width="3.6" height="3" fill="#5f9a4c"/>
<rect x="174.27" y="77" width="2.6" height="4.5" fill="#9b9185"/>
<rect x="180.27" y="77" width="2.6" height="4.5" fill="#9b9185"/>
<rect x="174.715" y="83" width="3.6" height="3" fill="#5f9a4c"/>
<rect x="180.715" y="83" width="3.6" height="3" fill="#5f9a4c"/>
<rect x="175.215" y="86" width="2.6" height="4.5" fill="#9b9185"/>
<rect x="181.215" y="86" width="2.6" height="4.5" fill="#9b9185"/>
<rect x="175.66" y="92" width="3.6" height="3" fill="#5f9a4c"/>
<rect x="181.66" y="92" width="3.6" height="3" fill="#5f9a4c"/>
<rect x="176.16" y="95" width="2.6" height="4.5" fill="#9b9185"/>
<rect x="182.16" y="95" width="2.6" height="4.5" fill="#9b9185"/>
<rect x="178.09" y="2" width="21.909999999999997" height="6" fill="#cdd6d6"/>
<line x1="183.09" y1="2" x2="183.09" y2="8" stroke="#e6dfd2" stroke-width="0.9"/>
<line x1="188.09" y1="2" x2="188.09" y2="8" stroke="#e6dfd2" stroke-width="0.9"/>
<line x1="193.09" y1="2" x2="193.09" y2="8" stroke="#e6dfd2" stroke-width="0.9"/>
<rect x="178.99" y="12" width="21.00999999999999" height="6" fill="#cdd6d6"/>
<line x1="183.99" y1="12" x2="183.99" y2="18" stroke="#e6dfd2" stroke-width="0.9"/>
<line x1="188.99" y1="12" x2="188.99" y2="18" stroke="#e6dfd2" stroke-width="0.9"/>
<line x1="193.99" y1="12" x2="193.99" y2="18" stroke="#e6dfd2" stroke-width="0.9"/>
<rect x="179.89" y="22" width="20.110000000000014" height="6" fill="#cdd6d6"/>
<line x1="184.89" y1="22" x2="184.89" y2="28" stroke="#e6dfd2" stroke-width="0.9"/>
<line x1="189.89" y1="22" x2="189.89" y2="28" stroke="#e6dfd2" stroke-width="0.9"/>
<line x1="194.89" y1="22" x2="194.89" y2="28" stroke="#e6dfd2" stroke-width="0.9"/>
<rect x="180.79" y="32" width="19.210000000000008" height="6" fill="#cdd6d6"/>
<line x1="185.79" y1="32" x2="185.79" y2="38" stroke="#e6dfd2" stroke-width="0.9"/>
<line x1="190.79" y1="32" x2="190.79" y2="38" stroke="#e6dfd2" stroke-width="0.9"/>
<line x1="195.79" y1="32" x2="195.79" y2="38" stroke="#e6dfd2" stroke-width="0.9"/>
<rect x="181.69" y="42" width="18.310000000000002" height="6" fill="#cdd6d6"/>
<line x1="186.69" y1="42" x2="186.69" y2="48" stroke="#e6dfd2" stroke-width="0.9"/>
<line x1="191.69" y1="42" x2="191.69" y2="48" stroke="#e6dfd2" stroke-width="0.9"/>
<line x1="196.69" y1="42" x2="196.69" y2="48" stroke="#e6dfd2" stroke-width="0.9"/>
<rect x="182.59" y="52" width="17.409999999999997" height="6" fill="#cdd6d6"/>
<line x1="187.59" y1="52" x2="187.59" y2="58" stroke="#e6dfd2" stroke-width="0.9"/>
<line x1="192.59" y1="52" x2="192.59" y2="58" stroke="#e6dfd2" stroke-width="0.9"/>
<line x1="197.59" y1="52" x2="197.59" y2="58" stroke="#e6dfd2" stroke-width="0.9"/>
<rect x="183.49" y="62" width="16.50999999999999" height="6" fill="#cdd6d6"/>
<line x1="188.49" y1="62" x2="188.49" y2="68" stroke="#e6dfd2" stroke-width="0.9"/>
<line x1="193.49" y1="62" x2="193.49" y2="68" stroke="#e6dfd2" stroke-width="0.9"/>
<line x1="198.49" y1="62" x2="198.49" y2="68" stroke="#e6dfd2" stroke-width="0.9"/>
<rect x="184.39" y="72" width="15.610000000000014" height="6" fill="#cdd6d6"/>
<line x1="189.39" y1="72" x2="189.39" y2="78" stroke="#e6dfd2" stroke-width="0.9"/>
<line x1="194.39" y1="72" x2="194.39" y2="78" stroke="#e6dfd2" stroke-width="0.9"/>
<line x1="199.39" y1="72" x2="199.39" y2="78" stroke="#e6dfd2" stroke-width="0.9"/>
<rect x="185.29" y="82" width="14.710000000000008" height="6" fill="#cdd6d6"/>
<line x1="190.29" y1="82" x2="190.29" y2="88" stroke="#e6dfd2" stroke-width="0.9"/>
<line x1="195.29" y1="82" x2="195.29" y2="88" stroke="#e6dfd2" stroke-width="0.9"/>
<line x1="200.29" y1="82" x2="200.29" y2="88" stroke="#e6dfd2" stroke-width="0.9"/>
<rect x="186.19" y="92" width="13.810000000000002" height="6" fill="#cdd6d6"/>
<line x1="191.19" y1="92" x2="191.19" y2="98" stroke="#e6dfd2" stroke-width="0.9"/>
<line x1="196.19" y1="92" x2="196.19" y2="98" stroke="#e6dfd2" stroke-width="0.9"/>
<line x1="201.19" y1="92" x2="201.19" y2="98" stroke="#e6dfd2" stroke-width="0.9"/>
<rect x="187.09" y="102" width="12.909999999999997" height="6" fill="#cdd6d6"/>
<line x1="192.09" y1="102" x2="192.09" y2="108" stroke="#e6dfd2" stroke-width="0.9"/>
<line x1="197.09" y1="102" x2="197.09" y2="108" stroke="#e6dfd2" stroke-width="0.9"/>
<line x1="202.09" y1="102" x2="202.09" y2="108" stroke="#e6dfd2" stroke-width="0.9"/>
<line x1="189" y1="0" x2="196" y2="110" stroke="#e4dccd" stroke-width="1.6"/>
<rect x="112" y="80" width="88" height="26" fill="#dbd2c3"/>
<rect x="114" y="78" width="2.6" height="12" fill="#b6bdb6"/>
<rect x="118" y="78" width="2.6" height="12" fill="#b6bdb6"/>
<rect x="122" y="78" width="2.6" height="12" fill="#b6bdb6"/>
<rect x="112" y="92" width="15" height="6" fill="#e7e3d9"/>
<rect x="134" y="82" width="4" height="7" fill="#5c9a4f"/>
<rect x="137" y="86" width="12" height="11" fill="#cfc9ba"/>
<rect x="146" y="88" width="4" height="9" fill="#b3b8b0"/>
<polygon points="150.5,75 158,75 160,101 152,101" fill="#9bc947"/>
<polygon points="165.5,75 172,75 175,104 167,104" fill="#9bc947"/>
<rect x="158" y="84" width="9" height="14" fill="#b9b5a6"/>
<rect x="112" y="98" width="88" height="27" fill="#45413c"/>
<rect x="113" y="100" width="14" height="26" fill="#35383a"/>
<rect x="118" y="105" width="8" height="16" fill="#86a3b3"/>
<rect x="120.5" y="104" width="3.4" height="4" fill="#9c7f68"/>
<rect x="126.5" y="94" width="5.5" height="30" fill="#8cc63f"/>
<rect x="138" y="98" width="3.6" height="25" fill="#8cc63f"/>
<rect x="126.5" y="97" width="36" height="3.4" fill="#97cb45"/>
<rect x="131.5" y="94.5" width="8" height="5.5" fill="#3c9c4b"/>
<rect x="132" y="100.5" width="6" height="22" fill="#56605c"/>
<rect x="133" y="104" width="4" height="12" fill="#8b958f"/>
<rect x="147.5" y="100" width="3.5" height="22" fill="#8cc63f"/>
<rect x="152.5" y="100" width="3.4" height="21" fill="#8cc63f"/>
<rect x="166.5" y="103" width="4.5" height="18" fill="#8cc63f"/>
<rect x="141.6" y="103" width="5.9" height="17" fill="#2a2d2c"/>
<rect x="156" y="104" width="5" height="15" fill="#2f302e"/>
<rect x="171" y="105" width="5" height="13" fill="#3b3632"/>
<rect x="176" y="96" width="24" height="8" fill="#d9d1c2"/>
<rect x="184" y="108" width="6" height="3" fill="#8b4f86"/>
<rect x="186" y="114" width="10" height="4" fill="#6a4a34"/>
<rect x="196" y="115" width="4" height="3.4" fill="#e8e8e8"/>
<rect x="100.5" y="88" width="12.5" height="54" fill="#4f5251"/>
<rect x="108" y="89" width="4.6" height="53" fill="#7b7e7c"/>
<polygon points="80.5,133 113,133 113,125 200,120 200,150 80.5,150" fill="#9e9886"/>
<polygon points="113,141 200,132 200,150 90,150" fill="#8f8a7b"/>
<polygon points="150,129 170,127 172,139 150,141" fill="#8e9160"/>
<polygon points="174,121 196,121 196,131 186,137 175,134" fill="#83927a"/>
<polygon points="176,134 190,132 188,141 177,141" fill="#5b5149"/>
<line x1="182.5" y1="100" x2="186" y2="131" stroke="#b9b3a3" stroke-width="1.3"/>
<rect x="187" y="122" width="3.5" height="3" fill="#3aa64a"/>
<rect x="144.5" y="117" width="12.5" height="12.5" fill="#2c3833"/>
<rect x="118.4" y="124" width="31.6" height="6.5" fill="#4a3428"/>
<rect x="118.4" y="130.5" width="32" height="1.8" fill="#7a6a58"/>
<rect x="119" y="132" width="1.2" height="6.5" fill="#55483c"/>
<rect x="148" y="132" width="1.2" height="6.5" fill="#55483c"/>
<rect x="149.5" y="125" width="1.6" height="10" fill="#9aa09c"/>
<rect x="166.5" y="128.5" width="9.5" height="14.5" fill="#3b2a23"/>
<rect x="167.6" y="130" width="7.2" height="11.5" fill="#4a362c"/>
<path d="M24.5,150 L27,125 L31,100 L35,80 L37.5,62 L39,44" fill="none" stroke="#7b4637" stroke-width="1.7"/>
<path d="M37.5,62 L30,48 L24,38 M36,72 L48,58 L58,52 M35,80 L20,66 L9,62 M31,100 L45,88 L60,84 M38,50 L41,30 L42,18" fill="none" stroke="#4e3a30" stroke-width=".8"/>
<circle cx="3.9" cy="16.4" r="1.3" fill="#a12a24"/>
<circle cx="7.1" cy="16.2" r="1.2" fill="#8c231f"/>
<circle cx="2.0" cy="17.7" r="0.8" fill="#a12a24"/>
<circle cx="5.3" cy="16.0" r="1.2" fill="#8c231f"/>
<circle cx="5.8" cy="18.4" r="0.8" fill="#7d2320"/>
<circle cx="2.1" cy="16.8" r="1.2" fill="#8c231f"/>
<circle cx="3.7" cy="16.4" r="0.9" fill="#b3372c"/>
<circle cx="1.3" cy="25.6" r="0.9" fill="#8c231f"/>
<circle cx="0.4" cy="25.1" r="0.8" fill="#a12a24"/>
<circle cx="1.5" cy="25.0" r="1.2" fill="#b3372c"/>
<circle cx="0.8" cy="26.3" r="1.1" fill="#8c231f"/>
<circle cx="10.8" cy="27.8" r="1.0" fill="#b3372c"/>
<circle cx="9.2" cy="28.6" r="1.3" fill="#b3372c"/>
<circle cx="9.7" cy="25.2" r="1.2" fill="#8c231f"/>
<circle cx="10.5" cy="25.5" r="1.1" fill="#a12a24"/>
<circle cx="11.8" cy="25.2" r="1.2" fill="#b3372c"/>
<circle cx="8.0" cy="26.4" r="1.1" fill="#7d2320"/>
<circle cx="13.4" cy="27.0" r="1.0" fill="#a12a24"/>
<circle cx="13.4" cy="28.5" r="1.3" fill="#7d2320"/>
<circle cx="14.2" cy="27.7" r="1.3" fill="#a12a24"/>
<circle cx="8.3" cy="35.5" r="1.2" fill="#7d2320"/>
<circle cx="3.7" cy="37.0" r="0.9" fill="#8c231f"/>
<circle cx="5.5" cy="37.5" r="1.1" fill="#8c231f"/>
<circle cx="5.7" cy="36.2" r="1.4" fill="#7d2320"/>
<circle cx="7.9" cy="35.2" r="1.1" fill="#b3372c"/>
<circle cx="7.3" cy="42.4" r="1.0" fill="#a12a24"/>
<circle cx="3.7" cy="41.6" r="1.0" fill="#7d2320"/>
<circle cx="8.4" cy="41.4" r="1.0" fill="#8c231f"/>
<circle cx="5.4" cy="42.3" r="1.2" fill="#8c231f"/>
<circle cx="7.4" cy="43.1" r="1.2" fill="#a12a24"/>
<circle cx="5.7" cy="44.9" r="1.5" fill="#7d2320"/>
<circle cx="5.3" cy="42.5" r="1.1" fill="#7d2320"/>
<circle cx="22.2" cy="36.8" r="0.9" fill="#8c231f"/>
<circle cx="22.4" cy="38.3" r="0.9" fill="#8c231f"/>
<circle cx="24.1" cy="39.3" r="1.2" fill="#a12a24"/>
<circle cx="25.5" cy="38.3" r="0.9" fill="#b3372c"/>
<circle cx="35.0" cy="33.3" r="1.1" fill="#a12a24"/>
<circle cx="34.5" cy="34.5" r="1.1" fill="#7d2320"/>
<circle cx="32.2" cy="31.9" r="1.3" fill="#b3372c"/>
<circle cx="32.9" cy="33.6" r="1.2" fill="#8c231f"/>
<circle cx="36.8" cy="16.1" r="0.9" fill="#a12a24"/>
<circle cx="36.0" cy="15.4" r="1.3" fill="#a12a24"/>
<circle cx="35.8" cy="15.3" r="1.1" fill="#8c231f"/>
<circle cx="34.4" cy="15.2" r="1.2" fill="#b3372c"/>
<circle cx="47.1" cy="31.6" r="1.4" fill="#8c231f"/>
<circle cx="48.4" cy="32.8" r="1.3" fill="#8c231f"/>
<circle cx="43.6" cy="31.0" r="1.3" fill="#a12a24"/>
<circle cx="48.3" cy="30.8" r="0.9" fill="#b3372c"/>
<circle cx="45.6" cy="33.4" r="1.5" fill="#b3372c"/>
<circle cx="42.6" cy="28.8" r="1.1" fill="#b3372c"/>
<circle cx="43.6" cy="31.7" r="1.4" fill="#a12a24"/>
<circle cx="45.8" cy="31.9" r="1.4" fill="#a12a24"/>
<circle cx="44.6" cy="35.7" r="1.1" fill="#8c231f"/>
<circle cx="42.9" cy="35.9" r="1.4" fill="#b3372c"/>
<circle cx="41.0" cy="38.5" r="1.3" fill="#7d2320"/>
<circle cx="42.5" cy="38.5" r="1.3" fill="#8c231f"/>
<circle cx="45.4" cy="35.4" r="1.2" fill="#7d2320"/>
<circle cx="38.6" cy="39.7" r="1.4" fill="#7d2320"/>
<circle cx="37.8" cy="40.5" r="1.2" fill="#8c231f"/>
<circle cx="34.5" cy="42.1" r="1.3" fill="#a12a24"/>
<circle cx="37.1" cy="42.6" r="1.1" fill="#8c231f"/>
<circle cx="38.7" cy="39.9" r="1.0" fill="#b3372c"/>
<circle cx="48.0" cy="46.9" r="1.0" fill="#7d2320"/>
<circle cx="49.6" cy="44.5" r="1.3" fill="#7d2320"/>
<circle cx="48.8" cy="47.1" r="1.2" fill="#8c231f"/>
<circle cx="48.2" cy="46.1" r="0.8" fill="#7d2320"/>
<circle cx="49.3" cy="46.4" r="1.3" fill="#8c231f"/>
<circle cx="19.2" cy="51.0" r="1.3" fill="#a12a24"/>
<circle cx="19.6" cy="51.0" r="1.2" fill="#a12a24"/>
<circle cx="11.1" cy="55.1" r="0.9" fill="#a12a24"/>
<circle cx="10.8" cy="56.0" r="1.2" fill="#a12a24"/>
<circle cx="9.8" cy="56.2" r="1.2" fill="#8c231f"/>
<circle cx="5.5" cy="58.9" r="1.2" fill="#7d2320"/>
<circle cx="5.0" cy="58.5" r="1.2" fill="#b3372c"/>
<circle cx="6.2" cy="59.8" r="0.9" fill="#7d2320"/>
<circle cx="1.8" cy="60.2" r="1.1" fill="#a12a24"/>
<circle cx="3.5" cy="60.8" r="0.9" fill="#b3372c"/>
<circle cx="3.9" cy="61.9" r="0.9" fill="#b3372c"/>
<circle cx="19.9" cy="61.9" r="1.5" fill="#8c231f"/>
<circle cx="21.8" cy="60.1" r="1.4" fill="#8c231f"/>
<circle cx="22.6" cy="61.7" r="0.9" fill="#7d2320"/>
<circle cx="23.4" cy="64.8" r="1.1" fill="#b3372c"/>
<circle cx="21.5" cy="65.4" r="0.8" fill="#7d2320"/>
<circle cx="21.8" cy="64.1" r="1.0" fill="#b3372c"/>
<circle cx="30.0" cy="64.9" r="1.5" fill="#8c231f"/>
<circle cx="31.7" cy="65.0" r="1.0" fill="#a12a24"/>
<circle cx="31.5" cy="65.2" r="1.3" fill="#7d2320"/>
<circle cx="21.5" cy="72.5" r="1.5" fill="#7d2320"/>
<circle cx="18.5" cy="73.3" r="1.2" fill="#b3372c"/>
<circle cx="18.2" cy="70.6" r="1.3" fill="#7d2320"/>
<circle cx="21.7" cy="71.3" r="0.8" fill="#a12a24"/>
<circle cx="46.0" cy="72.1" r="1.4" fill="#a12a24"/>
<circle cx="44.2" cy="72.2" r="0.8" fill="#7d2320"/>
<circle cx="46.4" cy="72.5" r="0.9" fill="#8c231f"/>
<circle cx="61.4" cy="74.1" r="1.0" fill="#8c231f"/>
<circle cx="59.0" cy="72.6" r="1.0" fill="#8c231f"/>
<circle cx="59.3" cy="73.0" r="0.9" fill="#b3372c"/>
<circle cx="69.0" cy="71.1" r="0.8" fill="#a12a24"/>
<circle cx="68.7" cy="70.1" r="0.9" fill="#7d2320"/>
<circle cx="67.2" cy="69.9" r="1.3" fill="#7d2320"/>
<circle cx="72.5" cy="78.1" r="1.4" fill="#b3372c"/>
<circle cx="72.6" cy="79.1" r="1.0" fill="#8c231f"/>
<circle cx="71.7" cy="77.7" r="0.8" fill="#8c231f"/>
<circle cx="16.1" cy="78.4" r="1.4" fill="#7d2320"/>
<circle cx="16.7" cy="76.8" r="1.4" fill="#b3372c"/>
<circle cx="18.4" cy="78.5" r="0.8" fill="#8c231f"/>
<circle cx="16.6" cy="77.8" r="1.0" fill="#b3372c"/>
<circle cx="34.9" cy="84.1" r="1.0" fill="#b3372c"/>
<circle cx="31.9" cy="83.1" r="1.0" fill="#a12a24"/>
<circle cx="32.9" cy="84.0" r="0.9" fill="#a12a24"/>
<circle cx="31.4" cy="84.9" r="0.9" fill="#a12a24"/>
<circle cx="39.5" cy="87.4" r="1.2" fill="#a12a24"/>
<circle cx="40.4" cy="88.1" r="1.3" fill="#7d2320"/>
<circle cx="41.2" cy="88.7" r="1.1" fill="#b3372c"/>
<circle cx="41.0" cy="88.4" r="0.8" fill="#7d2320"/>
<circle cx="48.9" cy="84.9" r="0.9" fill="#a12a24"/>
<circle cx="49.3" cy="84.2" r="1.4" fill="#8c231f"/>
<circle cx="46.3" cy="82.7" r="1.2" fill="#a12a24"/>
<circle cx="47.5" cy="83.9" r="0.8" fill="#a12a24"/>
<circle cx="55.6" cy="88.6" r="1.1" fill="#a12a24"/>
<circle cx="54.8" cy="86.6" r="1.5" fill="#a12a24"/>
<circle cx="55.8" cy="86.5" r="1.3" fill="#b3372c"/>
<circle cx="56.5" cy="89.2" r="1.0" fill="#8c231f"/>
<circle cx="53.7" cy="88.5" r="1.1" fill="#7d2320"/>
<circle cx="60.3" cy="91.1" r="1.0" fill="#a12a24"/>
<circle cx="62.5" cy="90.4" r="0.9" fill="#8c231f"/>
<circle cx="61.3" cy="90.4" r="1.3" fill="#8c231f"/>
<circle cx="60.0" cy="88.8" r="1.0" fill="#a12a24"/>
<circle cx="36.6" cy="97.4" r="1.0" fill="#b3372c"/>
<circle cx="35.9" cy="96.9" r="0.9" fill="#8c231f"/>
<circle cx="35.4" cy="96.1" r="1.1" fill="#b3372c"/>
<circle cx="44.9" cy="97.7" r="1.5" fill="#7d2320"/>
<circle cx="46.6" cy="96.7" r="1.4" fill="#8c231f"/>
<circle cx="43.6" cy="96.1" r="1.3" fill="#b3372c"/>
<circle cx="69.4" cy="92.2" r="1.4" fill="#b3372c"/>
<circle cx="69.2" cy="93.5" r="1.0" fill="#7d2320"/>
<circle cx="67.7" cy="92.2" r="1.5" fill="#7d2320"/>
<circle cx="72.7" cy="97.5" r="1.1" fill="#7d2320"/>
<circle cx="72.4" cy="97.8" r="0.8" fill="#b3372c"/>
<circle cx="74.1" cy="96.1" r="1.4" fill="#a12a24"/>
<circle cx="79.1" cy="79.6" r="1.1" fill="#7d2320"/>
<circle cx="77.7" cy="80.7" r="0.9" fill="#7d2320"/>
<circle cx="78.7" cy="80.7" r="1.0" fill="#a12a24"/>
<circle cx="81.8" cy="64.6" r="1.5" fill="#8c231f"/>
<circle cx="82.1" cy="64.9" r="1.0" fill="#b3372c"/>
<text x="67" y="111" font-family="Liberation Serif,serif" font-weight="bold" font-size="36" fill="#86d12c" stroke="#86d12c" stroke-width="1.1" textLength="11" lengthAdjust="spacingAndGlyphs">1</text>
<text x="66.3" y="117.3" font-family="Liberation Sans,sans-serif" font-weight="bold" font-size="4.6" fill="#7ecb2b" textLength="13" lengthAdjust="spacingAndGlyphs">СЕКЦІЯ</text>
<text x="160" y="19.5" font-family="Liberation Sans,sans-serif" font-weight="bold" font-size="7.2" fill="#6c7068" opacity=".55" textLength="30" lengthAdjust="spacingAndGlyphs">LIGAPRO</text>
<path d="M137,12 L143,6 L149,12 L149,19 L137,19 Z" fill="none" stroke="#63b84a" stroke-width="1.6" opacity=".6"/>
</g></g></svg>
<div class="a " style="left:986px;top:220px;width:328.5px;height:700px;background:#f8f9fa"></div>
<div class="a t" style="left:986.5px;width:327px;top:219px;text-align:center;line-height:21.2px;font-size:11.4px;color:#212529;white-space:normal"><span style="font-weight:bold;font-size:14.35px">Служебная информация</span> <svg width="13.5" height="13.5" viewBox="0 0 512 512" style="vertical-align:-2px;margin:0 1px"><path fill="#212529" d="M256 8C119.043 8 8 119.083 8 256c0 136.997 111.043 248 248 248s248-111.003 248-248C504 119.083 392.957 8 256 8zm0 448c-110.532 0-200-89.431-200-200 0-110.495 89.472-200 200-200 110.491 0 200 89.471 200 200 0 110.530-89.431 200-200 200zm107.244-255.200c0 67.052-72.421 68.084-72.421 92.863V300c0 6.627-5.373 12-12 12h-45.647c-6.627 0-12-5.373-12-12v-8.659c0-35.745 27.100-50.034 47.579-61.516 17.561-9.845 28.324-16.541 28.324-29.579 0-17.246-21.999-28.693-39.784-28.693-23.189 0-33.894 10.977-48.942 29.969-4.057 5.120-11.460 6.071-16.666 2.124l-27.824-21.098c-5.107-3.872-6.251-11.066-2.644-16.363C184.846 131.491 214.940 112 261.794 112c49.071 0 101.450 38.304 101.450 88.800zM298 368c0 23.159-18.841 42-42 42s-42-18.841-42-42 18.841-42 42-42 42 18.841 42 42z"/></svg> (не отображается на сайте)</div>
<div class="a t " style="left:994px;top:268.7px;line-height:20px;font-weight:bold;font-size:14.2px;color:#6c757d">Владелец</div>
<div class="a inp" style="left:994px;top:291px;width:312.5px;height:30.5px;font-size:14.3px;line-height:27.0px;">Григорцова Наталія</div>
<div class="a t " style="left:994px;top:329.0px;line-height:20px;font-weight:bold;font-size:14.2px;color:#6c757d">Телефон 1</div>
<svg class="a" style="left:1085.3px;top:332px;" width="14.00" height="14" viewBox="0 0 512 512"><path fill="#007bff" d="M505 442.7L405.3 343c-4.500-4.500-10.600-7-17-7H372c27.600-35.300 44-79.700 44-128C416 93.100 322.900 0 208 0S0 93.100 0 208s93.100 208 208 208c48.300 0 92.700-16.400 128-44v16.300c0 6.400 2.500 12.500 7 17l99.700 99.700c9.400 9.400 24.600 9.400 33.900 0l28.300-28.300c9.400-9.400 9.400-24.600.1-34zM208 336c-70.700 0-128-57.200-128-128 0-70.700 57.200-128 128-128 70.700 0 128 57.200 128 128 0 70.700-57.200 128-128 128z"/></svg>
<div class="a t " style="left:1155.3px;top:329.0px;line-height:20px;font-weight:bold;font-size:14.2px;color:#6c757d">Телефон 2</div>
<div class="a inp" style="left:994px;top:351px;width:151px;height:30.5px;font-size:14px;line-height:27.0px;">380504845802</div>
<div class="a inp" style="left:1155.3px;top:351px;width:151px;height:30.5px;font-size:14.3px;line-height:27.0px;"></div>
<svg class="a" style="left:994px;top:385.3px;" width="18.00" height="18" viewBox="0 0 512 512"><path fill="#7b519d" d="M444 50Q435 39 393 21Q350 3 265 0Q263 0 228 1Q192 1 146 12Q99 23 64 53Q13 109 14 210Q12 244 17 290Q21 336 46 376Q72 416 131 434V486Q130 487 132 497Q134 507 144 511Q154 514 162 508Q170 502 178 492Q182 488 186 483Q200 467 216 450Q278 454 320 447Q362 441 368 438Q370 438 374 437Q389 434 414 423Q439 411 463 382Q486 352 494 296Q505 200 491 139Q476 77 444 50ZM458 287Q451 333 433 357Q414 381 393 390Q373 399 361 401Q357 401 355 402Q349 404 313 410Q277 416 224 413Q223 414 210 430Q196 446 180 465Q164 483 156 492Q146 501 145 487Q145 482 145 461Q145 441 145 422Q145 402 145 401Q145 401 145 401Q145 401 145 401Q97 386 76 354Q56 321 52 284Q49 246 50 217Q50 214 50 211Q49 127 93 80Q122 55 162 46Q201 37 231 36Q262 36 263 37Q263 37 263 37Q335 38 373 53Q410 67 417 76Q445 99 456 153Q467 206 458 287ZM319 206Q318 213 313 213Q307 213 306 207Q305 174 273 173Q267 172 267 166Q268 160 274 160Q316 163 319 206ZM339 218Q340 185 321 163Q301 142 263 138Q257 137 257 131Q258 126 264 125Q308 129 330 155Q353 181 352 218Q351 224 346 224Q340 224 339 217ZM386 231Q385 237 380 237Q374 237 373 231Q372 170 337 137Q303 105 252 105Q246 104 246 98Q246 92 252 92Q309 92 347 129Q384 165 386 231ZM375 329Q367 344 353 355Q339 367 323 363V362Q306 357 276 341Q246 325 221 306Q196 286 178 263Q163 244 147 217Q119 160 121 161Q117 145 128 131Q140 118 155 109Q169 102 179 113Q180 114 186 121Q192 129 197 135Q205 148 212 159Q219 177 208 186L196 195Q192 199 191 204Q191 209 191 209Q191 210 198 227Q205 244 224 264Q242 284 275 294Q276 294 280 293Q285 293 289 288L299 276Q307 265 325 273Q350 286 371 305Q382 315 375 329Z"/></svg>
<div class="a" style="left:1017px;top:388px;width:13.8px;height:13.8px;background:#fff;border:1px solid #767676;border-radius:2.2px;box-sizing:border-box"></div>
<svg class="a" style="left:1037.5px;top:385.5px;" width="15.75" height="18" viewBox="0 0 448 512"><path fill="#3fb24f" d="M381 97Q315 33 224 32Q162 33 112 62Q62 92 32 142Q3 192 2 254Q2 314 31 365L0 480L118 449Q167 476 224 476Q286 475 336 446Q387 416 417 366Q447 316 448 254Q448 209 430 169Q413 129 381 97ZM224 439Q173 438 130 413L123 409L53 427L72 359L68 352Q40 307 39 254Q41 176 94 124Q146 71 224 70Q300 70 354 124Q409 178 411 254Q408 332 355 385Q302 437 224 439ZM325 301Q320 298 306 291Q292 285 287 283Q280 278 275 285Q271 290 266 297Q260 304 257 307Q253 313 245 308Q221 297 203 283Q185 269 170 242Q166 236 173 230Q178 226 186 212Q188 207 185 202Q184 201 181 192Q178 184 174 174Q170 166 168 161Q162 149 157 152Q156 152 156 152Q151 152 145 152Q139 151 130 158Q130 159 129 160Q124 164 118 175Q112 186 111 205Q112 225 121 242Q130 258 133 262Q133 262 134 262Q134 263 135 264Q140 273 165 300Q189 327 228 346Q254 357 268 360Q283 362 295 360Q304 358 316 351Q328 344 332 334Q339 312 336 307Q334 304 328 302Q326 301 325 301Z"/></svg>
<div class="a" style="left:1058.5px;top:388px;width:13.8px;height:13.8px;background:#fff;border:1px solid #767676;border-radius:2.2px;box-sizing:border-box"></div>
<svg class="a" style="left:1155.3px;top:385.3px;" width="18.00" height="18" viewBox="0 0 512 512"><path fill="#7b519d" d="M444 50Q435 39 393 21Q350 3 265 0Q263 0 228 1Q192 1 146 12Q99 23 64 53Q13 109 14 210Q12 244 17 290Q21 336 46 376Q72 416 131 434V486Q130 487 132 497Q134 507 144 511Q154 514 162 508Q170 502 178 492Q182 488 186 483Q200 467 216 450Q278 454 320 447Q362 441 368 438Q370 438 374 437Q389 434 414 423Q439 411 463 382Q486 352 494 296Q505 200 491 139Q476 77 444 50ZM458 287Q451 333 433 357Q414 381 393 390Q373 399 361 401Q357 401 355 402Q349 404 313 410Q277 416 224 413Q223 414 210 430Q196 446 180 465Q164 483 156 492Q146 501 145 487Q145 482 145 461Q145 441 145 422Q145 402 145 401Q145 401 145 401Q145 401 145 401Q97 386 76 354Q56 321 52 284Q49 246 50 217Q50 214 50 211Q49 127 93 80Q122 55 162 46Q201 37 231 36Q262 36 263 37Q263 37 263 37Q335 38 373 53Q410 67 417 76Q445 99 456 153Q467 206 458 287ZM319 206Q318 213 313 213Q307 213 306 207Q305 174 273 173Q267 172 267 166Q268 160 274 160Q316 163 319 206ZM339 218Q340 185 321 163Q301 142 263 138Q257 137 257 131Q258 126 264 125Q308 129 330 155Q353 181 352 218Q351 224 346 224Q340 224 339 217ZM386 231Q385 237 380 237Q374 237 373 231Q372 170 337 137Q303 105 252 105Q246 104 246 98Q246 92 252 92Q309 92 347 129Q384 165 386 231ZM375 329Q367 344 353 355Q339 367 323 363V362Q306 357 276 341Q246 325 221 306Q196 286 178 263Q163 244 147 217Q119 160 121 161Q117 145 128 131Q140 118 155 109Q169 102 179 113Q180 114 186 121Q192 129 197 135Q205 148 212 159Q219 177 208 186L196 195Q192 199 191 204Q191 209 191 209Q191 210 198 227Q205 244 224 264Q242 284 275 294Q276 294 280 293Q285 293 289 288L299 276Q307 265 325 273Q350 286 371 305Q382 315 375 329Z"/></svg>
<div class="a" style="left:1178.3px;top:388px;width:13.8px;height:13.8px;background:#fff;border:1px solid #767676;border-radius:2.2px;box-sizing:border-box"></div>
<svg class="a" style="left:1198.8px;top:385.5px;" width="15.75" height="18" viewBox="0 0 448 512"><path fill="#3fb24f" d="M381 97Q315 33 224 32Q162 33 112 62Q62 92 32 142Q3 192 2 254Q2 314 31 365L0 480L118 449Q167 476 224 476Q286 475 336 446Q387 416 417 366Q447 316 448 254Q448 209 430 169Q413 129 381 97ZM224 439Q173 438 130 413L123 409L53 427L72 359L68 352Q40 307 39 254Q41 176 94 124Q146 71 224 70Q300 70 354 124Q409 178 411 254Q408 332 355 385Q302 437 224 439ZM325 301Q320 298 306 291Q292 285 287 283Q280 278 275 285Q271 290 266 297Q260 304 257 307Q253 313 245 308Q221 297 203 283Q185 269 170 242Q166 236 173 230Q178 226 186 212Q188 207 185 202Q184 201 181 192Q178 184 174 174Q170 166 168 161Q162 149 157 152Q156 152 156 152Q151 152 145 152Q139 151 130 158Q130 159 129 160Q124 164 118 175Q112 186 111 205Q112 225 121 242Q130 258 133 262Q133 262 134 262Q134 263 135 264Q140 273 165 300Q189 327 228 346Q254 357 268 360Q283 362 295 360Q304 358 316 351Q328 344 332 334Q339 312 336 307Q334 304 328 302Q326 301 325 301Z"/></svg>
<div class="a" style="left:1219.8px;top:388px;width:13.8px;height:13.8px;background:#fff;border:1px solid #767676;border-radius:2.2px;box-sizing:border-box"></div>
<div class="a t " style="left:994px;top:413.5px;line-height:20px;font-weight:bold;font-size:14.2px;color:#6c757d">Заметка</div>
<svg class="a" style="left:1060.5px;top:416.75px;" width="13.50" height="13.5" viewBox="0 0 512 512"><path fill="#5a6268" d="M256 8C119.043 8 8 119.083 8 256c0 136.997 111.043 248 248 248s248-111.003 248-248C504 119.083 392.957 8 256 8zm0 448c-110.532 0-200-89.431-200-200 0-110.495 89.472-200 200-200 110.491 0 200 89.471 200 200 0 110.530-89.431 200-200 200zm107.244-255.200c0 67.052-72.421 68.084-72.421 92.863V300c0 6.627-5.373 12-12 12h-45.647c-6.627 0-12-5.373-12-12v-8.659c0-35.745 27.100-50.034 47.579-61.516 17.561-9.845 28.324-16.541 28.324-29.579 0-17.246-21.999-28.693-39.784-28.693-23.189 0-33.894 10.977-48.942 29.969-4.057 5.120-11.460 6.071-16.666 2.124l-27.824-21.098c-5.107-3.872-6.251-11.066-2.644-16.363C184.846 131.491 214.940 112 261.794 112c49.071 0 101.450 38.304 101.450 88.800zM298 368c0 23.159-18.841 42-42 42s-42-18.841-42-42 18.841-42 42-42 42 18.841 42 42z"/></svg>
<div class="a " style="left:994px;top:436px;width:312.5px;height:82px;background:#fff;border:1px solid #ced4da;border-radius:4px;box-sizing:border-box;padding:3px 8px;font-size:12.25px;line-height:18.5px;color:#454c53">Новий клієнт 5435345345<svg style="position:absolute;right:1px;bottom:1px" width="12" height="12" viewBox="0 0 12 12"><path d="M11 1L1 11M11 5L5 11M11 9L9 11" stroke="#777" stroke-width="1" fill="none"/></svg></div>
<div class="a t " style="right:14.700000000000045px;top:520.5px;line-height:20px;font-size:12.5px;color:#007bff">Журнал заметок</div>
<div class="a t " style="left:994px;top:561.3px;line-height:20px;font-size:14.05px;color:#212529"><b style="color:#5f6871">Продается с</b> 19-12-2024</div>
<div class="a t " style="left:994px;top:586.0px;line-height:20px;font-weight:bold;font-size:14.2px;color:#6c757d">Прозвон</div>
<svg class="a" style="left:1061px;top:589px;" width="9.62" height="14" viewBox="0 0 352 512"><path fill="#6c757d" d="M242.72 256l100.07-100.07c12.28-12.28 12.28-32.190 0-44.480l-22.240-22.240c-12.280-12.280-32.190-12.280-44.480 0L176 189.280 75.930 89.210c-12.280-12.280-32.190-12.280-44.480 0L9.210 111.450c-12.280 12.280-12.280 32.190 0 44.480L109.280 256 9.210 356.070c-12.280 12.280-12.280 32.190 0 44.480l22.240 22.240c12.280 12.280 32.200 12.280 44.480 0L176 322.720l100.070 100.070c12.280 12.280 32.200 12.280 44.480 0l22.240-22.240c12.280-12.280 12.280-32.190 0-44.480L242.720 256z"/></svg>
<div class="a t " style="left:1155.5px;top:586.0px;line-height:20px;font-weight:bold;font-size:14.2px;color:#6c757d">Статус</div>
<div class="a inp" style="left:994px;top:608px;width:151px;height:30.5px;font-size:14.3px;line-height:27.0px;">24-01-2025</div>
<div class="a inp sel" style="left:1155.5px;top:608px;width:150.5px;height:30.5px;line-height:27.0px;">дозвонился<svg class="arr" width="8" height="10" viewBox="0 0 4 5"><path fill="#343a40" d="M2 0L0 2h4zm0 5L0 3h4z"/></svg></div>
<div class="a t " style="left:994px;top:653.5px;line-height:20px;font-weight:bold;font-size:14.2px;color:#6c757d">На сайте</div>
<div class="a" style="left:1058.3px;top:656.3px;width:13.8px;height:13.8px;background:#1a73e8;border-radius:2.5px"><svg width="13.8" height="13.8" viewBox="0 0 13 13" style="display:block"><path d="M3 6.8l2.4 2.5L10 3.8" fill="none" stroke="#fff" stroke-width="1.9" stroke-linecap="round" stroke-linejoin="round"/></svg></div>
<svg class="a" style="left:1081.3px;top:656.7px;" width="14.00" height="14" viewBox="0 0 512 512"><path fill="#007bff" d="M326.612 185.391c59.747 59.809 58.927 155.698.36 214.59-.11.12-.24.25-.36.37l-67.2 67.2c-59.27 59.27-155.699 59.262-214.96 0-59.27-59.26-59.27-155.7 0-214.96l37.106-37.106c9.84-9.84 26.786-3.3 27.294 10.606.648 17.722 3.826 35.527 9.69 52.721 1.986 5.822.567 12.262-3.783 16.612l-13.087 13.087c-28.026 28.026-28.905 73.66-1.155 101.96 28.024 28.579 74.086 28.749 102.325.51l67.2-67.19c28.191-28.191 28.073-73.757 0-101.83-3.701-3.694-7.429-6.564-10.341-8.569a16.037 16.037 0 0 1-6.947-12.606c-.396-10.567 3.348-21.456 11.698-29.806l21.054-21.055c5.521-5.521 14.182-6.199 20.584-1.731a152.482 152.482 0 0 1 20.522 17.197zM467.547 44.449c-59.261-59.262-155.69-59.27-214.96 0l-67.2 67.2c-.12.12-.25.25-.36.37-58.566 58.892-59.387 154.781.36 214.59a152.454 152.454 0 0 0 20.521 17.196c6.402 4.468 15.064 3.789 20.584-1.731l21.054-21.055c8.35-8.35 12.094-19.239 11.698-29.806a16.037 16.037 0 0 0-6.947-12.606c-2.912-2.005-6.64-4.875-10.341-8.569-28.073-28.073-28.191-73.639 0-101.83l67.2-67.19c28.239-28.239 74.3-28.069 102.325.51 27.75 28.3 26.872 73.934-1.155 101.96l-13.087 13.087c-4.35 4.35-5.769 10.79-3.783 16.612 5.864 17.194 9.042 34.999 9.69 52.721.509 13.906 17.454 20.446 27.294 10.606l37.106-37.106c59.271-59.259 59.271-155.699.001-214.959z"/></svg>
<div class="a " style="left:986.8px;top:646.4px;width:96.4px;height:32.1px;border:5.2px solid #fb2a0c;box-sizing:border-box;z-index:5"></div>
<div class="a t " style="left:1105.7px;top:653.5px;line-height:20px;font-weight:bold;font-size:14.2px;color:#007bff">QR</div>
<div class="a t " style="left:1155.3px;top:653.5px;line-height:20px;font-weight:bold;font-size:14.2px;font-size:14.1px;color:#6c757d">На главной сайта</div>
<div class="a" style="left:1281.5px;top:656px;width:13.8px;height:13.8px;background:#fff;border:1px solid #767676;border-radius:2.2px;box-sizing:border-box"></div>
<div class="a t " style="left:994px;top:682.7px;line-height:20px;font-weight:bold;font-size:14.2px;color:#6c757d">Вес</div>
<svg class="a" style="left:1027.5px;top:685.95px;" width="13.50" height="13.5" viewBox="0 0 512 512"><path fill="#212529" d="M256 8C119.043 8 8 119.083 8 256c0 136.997 111.043 248 248 248s248-111.003 248-248C504 119.083 392.957 8 256 8zm0 448c-110.532 0-200-89.431-200-200 0-110.495 89.472-200 200-200 110.491 0 200 89.471 200 200 0 110.530-89.431 200-200 200zm107.244-255.200c0 67.052-72.421 68.084-72.421 92.863V300c0 6.627-5.373 12-12 12h-45.647c-6.627 0-12-5.373-12-12v-8.659c0-35.745 27.100-50.034 47.579-61.516 17.561-9.845 28.324-16.541 28.324-29.579 0-17.246-21.999-28.693-39.784-28.693-23.189 0-33.894 10.977-48.942 29.969-4.057 5.120-11.460 6.071-16.666 2.124l-27.824-21.098c-5.107-3.872-6.251-11.066-2.644-16.363C184.846 131.491 214.940 112 261.794 112c49.071 0 101.450 38.304 101.450 88.800zM298 368c0 23.159-18.841 42-42 42s-42-18.841-42-42 18.841-42 42-42 42 18.841 42 42z"/></svg>
<div class="a inp" style="left:1074px;top:680px;width:97.5px;height:30.5px;font-size:14.3px;line-height:27.0px;"></div>
<div class="a t " style="left:994px;top:725.7px;line-height:20px;font-weight:bold;font-size:14.2px;color:#6c757d">В общую базу LigaPro</div>
<svg class="a" style="left:1155px;top:728.95px;" width="13.50" height="13.5" viewBox="0 0 512 512"><path fill="#5a6268" d="M256 8C119.043 8 8 119.083 8 256c0 136.997 111.043 248 248 248s248-111.003 248-248C504 119.083 392.957 8 256 8zm0 448c-110.532 0-200-89.431-200-200 0-110.495 89.472-200 200-200 110.491 0 200 89.471 200 200 0 110.530-89.431 200-200 200zm107.244-255.200c0 67.052-72.421 68.084-72.421 92.863V300c0 6.627-5.373 12-12 12h-45.647c-6.627 0-12-5.373-12-12v-8.659c0-35.745 27.100-50.034 47.579-61.516 17.561-9.845 28.324-16.541 28.324-29.579 0-17.246-21.999-28.693-39.784-28.693-23.189 0-33.894 10.977-48.942 29.969-4.057 5.120-11.460 6.071-16.666 2.124l-27.824-21.098c-5.107-3.872-6.251-11.066-2.644-16.363C184.846 131.491 214.940 112 261.794 112c49.071 0 101.450 38.304 101.450 88.800zM298 368c0 23.159-18.841 42-42 42s-42-18.841-42-42 18.841-42 42-42 42 18.841 42 42z"/></svg>
<div class="a" style="left:1177.5px;top:728.5px;width:13.8px;height:13.8px;background:#fff;border:1px solid #767676;border-radius:2.2px;box-sizing:border-box"></div>
<div class="a t " style="left:994px;top:754.8px;line-height:20px;font-weight:bold;font-size:14.2px;color:#6c757d">Учет рекламы</div>
<svg class="a" style="left:1100.5px;top:758.05px;" width="13.50" height="13.5" viewBox="0 0 512 512"><path fill="#5a6268" d="M256 8C119.043 8 8 119.083 8 256c0 136.997 111.043 248 248 248s248-111.003 248-248C504 119.083 392.957 8 256 8zm0 448c-110.532 0-200-89.431-200-200 0-110.495 89.472-200 200-200 110.491 0 200 89.471 200 200 0 110.530-89.431 200-200 200zm107.244-255.200c0 67.052-72.421 68.084-72.421 92.863V300c0 6.627-5.373 12-12 12h-45.647c-6.627 0-12-5.373-12-12v-8.659c0-35.745 27.100-50.034 47.579-61.516 17.561-9.845 28.324-16.541 28.324-29.579 0-17.246-21.999-28.693-39.784-28.693-23.189 0-33.894 10.977-48.942 29.969-4.057 5.120-11.460 6.071-16.666 2.124l-27.824-21.098c-5.107-3.872-6.251-11.066-2.644-16.363C184.846 131.491 214.940 112 261.794 112c49.071 0 101.450 38.304 101.450 88.800zM298 368c0 23.159-18.841 42-42 42s-42-18.841-42-42 18.841-42 42-42 42 18.841 42 42z"/></svg>
<div class="a" style="left:1118.5px;top:757.5px;width:13.8px;height:13.8px;background:#fff;border:1px solid #767676;border-radius:2.2px;box-sizing:border-box"></div>
<div class="a t " style="left:994px;top:792.0px;line-height:20px;font-size:14.3px;color:#007bff">Ссылка на источник</div>
<svg class="a" style="left:1133px;top:795px;" width="12.25" height="14" viewBox="0 0 448 512"><path fill="#007bff" d="M416 208H272V64c0-17.670-14.330-32-32-32h-32c-17.670 0-32 14.330-32 32v144H32c-17.670 0-32 14.330-32 32v32c0 17.670 14.330 32 32 32h144v144c0 17.670 14.330 32 32 32h32c17.670 0 32-14.330 32-32V304h144c17.670 0 32-14.330 32-32v-32c0-17.670-14.330-32-32-32z"/></svg>
<svg class="a" style="left:1157px;top:795px;" width="14.00" height="14" viewBox="0 0 512 512"><path fill="#007bff" d="M326.612 185.391c59.747 59.809 58.927 155.698.36 214.59-.11.12-.24.25-.36.37l-67.2 67.2c-59.27 59.27-155.699 59.262-214.96 0-59.27-59.26-59.27-155.7 0-214.96l37.106-37.106c9.84-9.84 26.786-3.3 27.294 10.606.648 17.722 3.826 35.527 9.69 52.721 1.986 5.822.567 12.262-3.783 16.612l-13.087 13.087c-28.026 28.026-28.905 73.66-1.155 101.96 28.024 28.579 74.086 28.749 102.325.51l67.2-67.19c28.191-28.191 28.073-73.757 0-101.83-3.701-3.694-7.429-6.564-10.341-8.569a16.037 16.037 0 0 1-6.947-12.606c-.396-10.567 3.348-21.456 11.698-29.806l21.054-21.055c5.521-5.521 14.182-6.199 20.584-1.731a152.482 152.482 0 0 1 20.522 17.197zM467.547 44.449c-59.261-59.262-155.69-59.27-214.96 0l-67.2 67.2c-.12.12-.25.25-.36.37-58.566 58.892-59.387 154.781.36 214.59a152.454 152.454 0 0 0 20.521 17.196c6.402 4.468 15.064 3.789 20.584-1.731l21.054-21.055c8.35-8.35 12.094-19.239 11.698-29.806a16.037 16.037 0 0 0-6.947-12.606c-2.912-2.005-6.64-4.875-10.341-8.569-28.073-28.073-28.191-73.639 0-101.83l67.2-67.19c28.239-28.239 74.3-28.069 102.325.51 27.75 28.3 26.872 73.934-1.155 101.96l-13.087 13.087c-4.35 4.35-5.769 10.79-3.783 16.612 5.864 17.194 9.042 34.999 9.69 52.721.509 13.906 17.454 20.446 27.294 10.606l37.106-37.106c59.271-59.259 59.271-155.699.001-214.959z"/></svg>
<div class="a t " style="left:994px;top:820.3px;line-height:20px;font-weight:bold;font-size:14.2px;color:#6c757d">На сайте по прямой ссылке</div>
<div class="a" style="left:1192.5px;top:823px;width:13.8px;height:13.8px;background:#fff;border:1px solid #767676;border-radius:2.2px;box-sizing:border-box"></div>
<svg class="a" style="left:1214.5px;top:823.55px;" width="13.50" height="13.5" viewBox="0 0 512 512"><path fill="#5a6268" d="M256 8C119.043 8 8 119.083 8 256c0 136.997 111.043 248 248 248s248-111.003 248-248C504 119.083 392.957 8 256 8zm0 448c-110.532 0-200-89.431-200-200 0-110.495 89.472-200 200-200 110.491 0 200 89.471 200 200 0 110.530-89.431 200-200 200zm107.244-255.200c0 67.052-72.421 68.084-72.421 92.863V300c0 6.627-5.373 12-12 12h-45.647c-6.627 0-12-5.373-12-12v-8.659c0-35.745 27.100-50.034 47.579-61.516 17.561-9.845 28.324-16.541 28.324-29.579 0-17.246-21.999-28.693-39.784-28.693-23.189 0-33.894 10.977-48.942 29.969-4.057 5.120-11.460 6.071-16.666 2.124l-27.824-21.098c-5.107-3.872-6.251-11.066-2.644-16.363C184.846 131.491 214.940 112 261.794 112c49.071 0 101.450 38.304 101.450 88.800zM298 368c0 23.159-18.841 42-42 42s-42-18.841-42-42 18.841-42 42-42 42 18.841 42 42z"/></svg>
<div class="a t " style="left:994px;top:846.3px;line-height:20px;font-weight:bold;font-size:14.2px;color:#6c757d">Не проверять на дубли</div>
<div class="a" style="left:1160.5px;top:849px;width:13.8px;height:13.8px;background:#fff;border:1px solid #767676;border-radius:2.2px;box-sizing:border-box"></div>
<svg class="a" style="left:1182.5px;top:849.55px;" width="13.50" height="13.5" viewBox="0 0 512 512"><path fill="#5a6268" d="M256 8C119.043 8 8 119.083 8 256c0 136.997 111.043 248 248 248s248-111.003 248-248C504 119.083 392.957 8 256 8zm0 448c-110.532 0-200-89.431-200-200 0-110.495 89.472-200 200-200 110.491 0 200 89.471 200 200 0 110.530-89.431 200-200 200zm107.244-255.200c0 67.052-72.421 68.084-72.421 92.863V300c0 6.627-5.373 12-12 12h-45.647c-6.627 0-12-5.373-12-12v-8.659c0-35.745 27.100-50.034 47.579-61.516 17.561-9.845 28.324-16.541 28.324-29.579 0-17.246-21.999-28.693-39.784-28.693-23.189 0-33.894 10.977-48.942 29.969-4.057 5.120-11.460 6.071-16.666 2.124l-27.824-21.098c-5.107-3.872-6.251-11.066-2.644-16.363C184.846 131.491 214.940 112 261.794 112c49.071 0 101.450 38.304 101.450 88.800zM298 368c0 23.159-18.841 42-42 42s-42-18.841-42-42 18.841-42 42-42 42 18.841 42 42z"/></svg>
<div class="a t " style="left:994px;top:872.3px;line-height:20px;font-weight:bold;font-size:14.2px;color:#6c757d">Спецпредложение на месяц</div>
<div class="a t " style="left:1167.5px;top:872.3px;line-height:20px;font-weight:bold;font-size:14.2px;color:#6c757d">(мой)</div>
<div class="a" style="left:1212px;top:875px;width:13.8px;height:13.8px;background:#fff;border:1px solid #767676;border-radius:2.2px;box-sizing:border-box"></div>
<svg class="a" style="left:1234px;top:875.55px;" width="13.50" height="13.5" viewBox="0 0 512 512"><path fill="#5a6268" d="M256 8C119.043 8 8 119.083 8 256c0 136.997 111.043 248 248 248s248-111.003 248-248C504 119.083 392.957 8 256 8zm0 448c-110.532 0-200-89.431-200-200 0-110.495 89.472-200 200-200 110.491 0 200 89.471 200 200 0 110.530-89.431 200-200 200zm107.244-255.200c0 67.052-72.421 68.084-72.421 92.863V300c0 6.627-5.373 12-12 12h-45.647c-6.627 0-12-5.373-12-12v-8.659c0-35.745 27.100-50.034 47.579-61.516 17.561-9.845 28.324-16.541 28.324-29.579 0-17.246-21.999-28.693-39.784-28.693-23.189 0-33.894 10.977-48.942 29.969-4.057 5.120-11.460 6.071-16.666 2.124l-27.824-21.098c-5.107-3.872-6.251-11.066-2.644-16.363C184.846 131.491 214.940 112 261.794 112c49.071 0 101.450 38.304 101.450 88.800zM298 368c0 23.159-18.841 42-42 42s-42-18.841-42-42 18.841-42 42-42 42 18.841 42 42z"/></svg>
<div class="a" style="left:0;top:0;width:30px;height:878px;z-index:50;background:linear-gradient(90deg,rgba(0,0,0,.088) 0,rgba(0,0,0,.066) 4px,rgba(0,0,0,.047) 8px,rgba(0,0,0,.031) 12px,rgba(0,0,0,.018) 16px,rgba(0,0,0,.008) 21px,rgba(0,0,0,0) 28px)"></div>
</div></body></html>
